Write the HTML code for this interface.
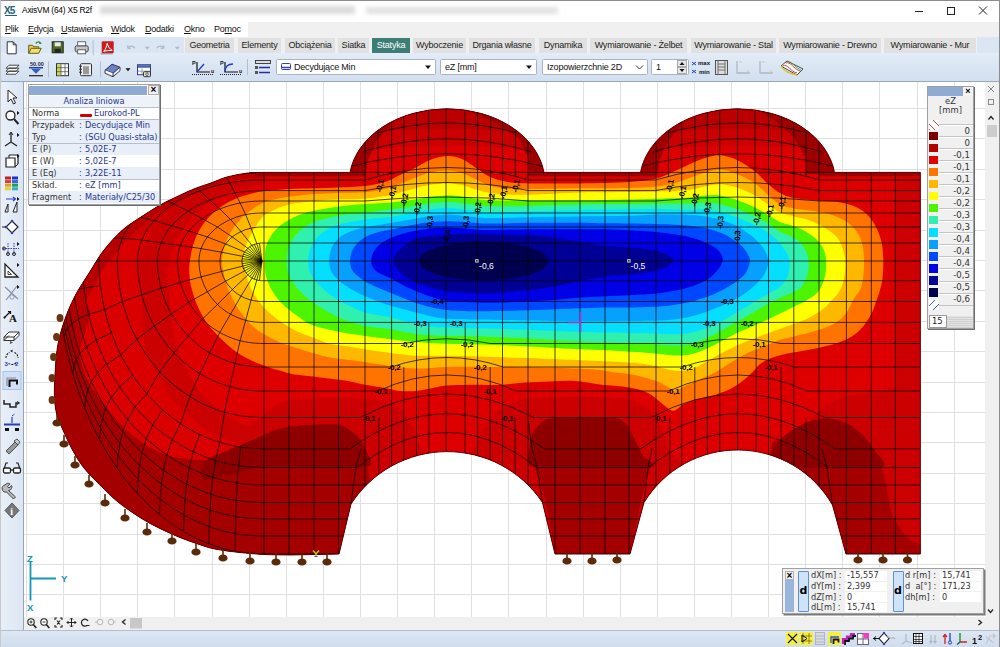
<!DOCTYPE html><html lang="pl"><head><meta charset="utf-8"><title>AxisVM (64) X5 R2f</title><style>
*{box-sizing:border-box}
html,body{margin:0;padding:0}
body{width:1000px;height:647px;overflow:hidden;background:#fff;font-family:"Liberation Sans",sans-serif;font-size:10px;color:#222;position:relative}
.abs{position:absolute}
#titlebar{left:0;top:0;width:1000px;height:22px;background:#fff;border-top:1px solid #8c8c8c}
#title{left:22px;top:5px;font-size:8.4px;color:#000;white-space:nowrap;letter-spacing:-0.2px}
#menubar{left:0;top:22px;width:1000px;height:15px;background:#f0f0f0}
#menuwhite{left:0;top:22px;width:248px;height:15px;background:#fff}
.mi{top:24px;font-size:9px;color:#111;white-space:nowrap;letter-spacing:-0.25px}
.mi u{text-decoration:underline}
#tb1{left:0;top:37px;width:1000px;height:17px;background:#dbe6f4}
#tabstrip{left:184px;top:37px;width:793px;height:16px;background:#f0f0f0}
.tab{top:38px;height:14.5px;background:#e1e1e1;font-size:9px;line-height:14.5px;text-align:center;color:#222;white-space:nowrap;letter-spacing:-0.2px}
.tab.on{background:#3c7d76;color:#fff}
#tb2{left:0;top:53px;width:1000px;height:28px;background:linear-gradient(#e3ecf8,#d2dfef)}
#tb2line{left:0;top:81px;width:1000px;height:1px;background:#9aa7b8}
.combo{top:59px;height:15.5px;border-radius:1.5px;background:#fff;border:1px solid #aab3c0;font-size:9px;line-height:14px;padding-left:4px;white-space:nowrap;letter-spacing:-0.2px;color:#111}
#lefttb{left:0;top:82px;width:24px;height:548px;background:linear-gradient(90deg,#e9f0f9,#dbe5f3);border-right:1px solid #98a4b4}
#vscroll{left:985px;top:82px;width:15px;height:535px;background:#f0f0f0}
#hscroll{left:24px;top:617px;width:976px;height:13px;background:#f0f0f0}
#status{left:0;top:630px;width:1000px;height:17px;background:linear-gradient(#dde7f4,#d0dcec);border-top:1px solid #b4bfce}
#winR{left:999px;top:0;width:1px;height:647px;background:#8c8c8c}
#winL{left:0;top:0;width:1px;height:647px;background:#c8c8c8}
.panel{background:#f0f0f0;border:1px solid #a0a0a0;box-shadow:1px 1px 0 #6e6e6e}
.pt{font-family:"DejaVu Sans",sans-serif;font-size:8.2px;white-space:nowrap;line-height:12px}
.nv{color:#26358f}
.lab{color:#333}
</style></head><body>
<svg id="plot" width="1000" height="647" viewBox="0 0 1000 647" style="position:absolute;left:0;top:0">
<defs><clipPath id="cs"><path d="M262 172.4L349.5 172.4L350 172.4 A97.9 73.5 0 0 1 544 172.4L640.5 172.4A97.9 73.5 0 0 1 834.5 172.4L920.3 172.4 L920.3 554L846 554 L832.5 505A109.5 109.5 0 0 0 644 502.5L630 554 L555 554 L542.5 502.5A114.6 114.6 0 0 0 351 504L339 554 L289.5 555C285.4 554.9 273.2 554.9 265 554.5C256.8 554.1 248.3 553.4 240 552.5C231.7 551.6 222 550.4 215 549C208 547.6 203.8 545.9 198 544C192.2 542.1 186.3 540.1 180 537.5C173.7 534.9 166.7 531.8 160 528.5C153.3 525.2 147 521.9 140 517.5C133 513.1 124.7 507.4 118 502C111.3 496.6 105.7 490.7 100 485C94.3 479.3 88.6 473.8 84 468C79.4 462.2 76 456.3 72.5 450C69 443.7 65.6 435.8 63 430C60.4 424.2 58.4 420.3 57 415C55.6 409.7 54.8 404.7 54.5 398C54.2 391.3 54.5 383.5 55 375C55.5 366.5 56 355.8 57.5 347C59 338.2 61.1 330.5 64 322C66.9 313.5 70.5 304.7 75 296C79.5 287.3 86.2 277.7 91 270C95.8 262.3 98.8 256.7 104 250C109.2 243.3 116.3 235.5 122.5 230C128.7 224.5 134.6 221.2 141 217C147.4 212.8 154.7 208.2 161 204.6C167.3 201 173.3 198.4 179 195.7C184.7 193 189.7 190.6 195 188.5C200.3 186.4 205.7 184.9 211 183C216.3 181.1 221.1 178.6 227 177C232.9 175.4 240.7 174 246.5 173.2C252.3 172.4 259.4 172.5 262 172.4Z"/></clipPath>
<clipPath id="vp"><rect x="24" y="82" width="961" height="535"/></clipPath></defs>
<rect x="24" y="82" width="961" height="535" fill="#fff"/>
<path d="M26.5 82V617M63.5 82V617M100.5 82V617M137.5 82V617M174.5 82V617M212.5 82V617M249.5 82V617M286.5 82V617M323.5 82V617M360.5 82V617M397.5 82V617M434.5 82V617M471.5 82V617M508.5 82V617M546.5 82V617M583.5 82V617M620.5 82V617M657.5 82V617M694.5 82V617M731.5 82V617M768.5 82V617M805.5 82V617M842.5 82V617M879.5 82V617M917.5 82V617M954.5 82V617M24 108.5H985M24 138.5H985M24 169.5H985M24 199.5H985M24 230.5H985M24 260.5H985M24 290.5H985M24 321.5H985M24 351.5H985M24 382.5H985M24 412.5H985M24 442.5H985M24 473.5H985M24 503.5H985M24 534.5H985M24 564.5H985M24 594.5H985" stroke="#dfdfe4" stroke-width="1" fill="none"/>
<g clip-path="url(#cs)">
<rect x="40" y="100" width="900" height="470" fill="#de0000"/>
<path d="M236 440C238.9 420 251.9 425.1 258 420C264.1 414.9 272.4 404.9 282 402C291.6 399.1 317.6 398.3 330 398C342.4 397.7 365.9 398.7 375 400C384.1 401.3 393.1 404.7 398 408C402.9 411.3 408.4 419.1 412 425C415.6 430.9 417.3 448.4 425 452C432.7 455.6 462.4 454.9 470 452C477.6 449.1 478 435.6 482 430C486 424.4 494.9 414 500 410C505.1 406 512 401.7 520 400C528 398.3 549.3 397.4 560 397C570.7 396.6 590.7 396.6 600 397C609.3 397.4 623.3 398.3 630 400C636.7 401.7 645.7 406 650 410C654.3 414 659.3 424.4 662 430C664.7 435.6 664.9 446.7 670 452C675.1 457.3 684 467.6 700 470C716 472.4 776.7 474 790 470C803.3 466 796.7 447.3 800 440C803.3 432.7 809.7 420.6 815 415C820.3 409.4 831.3 401.1 840 398C848.7 394.9 868.7 392.8 880 392C891.3 391.2 919 368.3 925 392C931 415.7 1016.9 546.3 925 570C833.1 593.7 327.9 587.3 236 570C144.1 552.7 233.1 460 236 440Z" fill="#cc0000"/>
<path d="M262 183C258.9 187.7 241.1 187.7 235 190C228.9 192.3 215.2 199.5 210 203C204.8 206.5 194.1 215.3 190 220C185.9 224.7 177.6 236.9 175 243C172.4 249.1 168.6 265.4 168 272C167.4 278.6 169.1 291.4 170 300C170.9 308.6 172.4 335.2 176 346C179.6 356.8 193.2 383.6 200.7 392.7C208.2 401.8 232.8 420.6 240 423.6C247.2 426.6 257.1 420.3 262 418C266.9 415.7 277.6 402.6 282 404C286.4 405.4 297.9 407.1 300 430C302.1 452.9 331.5 580.2 300 600C268.5 619.8 61.5 652.5 30 600C-1.5 547.5 2.9 202.5 30 150C57.1 97.5 234.9 146.2 262 150C289.1 153.8 265.1 178.3 262 183Z" fill="#cb0000"/>
<path d="M152 232C153.9 233.2 142.6 245.3 141 250C139.4 254.7 137.9 266.2 138 272C138.1 277.8 141.2 291.4 142 300C142.8 308.6 141.7 334.8 145 346C148.3 357.2 162.8 386.2 170 396C177.2 405.8 198.8 424.3 207 430C215.2 435.7 236.2 442.4 240 445C243.8 447.6 243.5 450 240 452C236.5 454 217.1 461.1 210 462C202.9 462.9 185.1 461.1 179 460C172.9 458.9 162.9 455.6 157.5 453C152.1 450.4 137.7 441.6 133 438C128.3 434.4 120.6 426 117 422C113.4 418 105.6 409 102 404C98.4 399 88.9 385.5 86 379C83.1 372.5 78.5 354.9 77 348C75.5 341.1 72.7 326.5 73 320C73.3 313.5 76.8 298.8 80 292C83.2 285.2 94.8 268.1 100 262C105.2 255.9 118.9 243.5 125 240C131.1 236.5 150.1 230.8 152 232Z" fill="#da0000"/>
<path d="M70 300C65.5 305.3 58.7 336.7 56 350C53.3 363.3 50.5 389.3 50 400C49.5 410.7 48.8 426 52 430C55.2 434 71.1 435.3 74 430C76.9 424.7 73.2 400.7 74 390C74.8 379.3 77.9 360.7 80 350C82.1 339.3 91.3 316.7 90 310C88.7 303.3 74.5 294.7 70 300Z" fill="#b40000"/>
<path d="M262 168C257.7 167.3 239.6 169.6 230 172C220.4 174.4 200.7 181.5 190 186C179.3 190.5 160 199.5 150 206C140 212.5 123.3 226.2 115 235C106.7 243.8 94 262.7 88 272C82 281.3 70.8 300.2 70 305C69.2 309.8 78 312 82 308C86 304 94.4 283.7 100 275C105.6 266.3 116.5 251.1 124 243C131.5 234.9 146.8 220.5 156 214C165.2 207.5 183 198.5 193 194C203 189.5 221.8 182.3 231 180C240.2 177.7 257.9 178.6 262 177C266.1 175.4 266.3 168.7 262 168Z" fill="#b80000"/>
<path d="M40 290C43.5 254 61.6 296.3 66 300C70.4 303.7 71.5 311.9 73 318C74.5 324.1 75.3 338.1 77 346C78.7 353.9 82.7 369.5 86 377C89.3 384.5 97.9 396.2 102 402C106.1 407.8 112.9 416 117 420.5C121.1 425 127.6 431.9 133 436C138.4 440.1 151.4 448.6 157.5 451.5C163.6 454.4 172 456.9 179 458C186 459.1 201.9 461.1 210 460C218.1 458.9 232.7 453.5 240 450C247.3 446.5 258.8 437 265 434C271.2 431 276.7 428.4 286.5 427.2C296.3 426 328.8 423.4 338.4 424.7C348 426 354.7 433.9 358.2 437C361.7 440.1 363.1 443.7 364.4 448C365.7 452.3 367 462.1 368 469C369 475.9 371.5 486.5 372 500C372.5 513.5 416.3 560.7 372 570C327.7 579.3 84.3 607.3 40 570C-4.3 532.7 36.5 326 40 290Z" fill="#a40000"/>
<path d="M205 461C208.7 457.4 233.8 447.9 242 444.5C250.2 441.1 276.9 429.2 286.5 427.2C296.1 425.2 331.2 423.7 338.4 424.7C345.6 425.7 355.6 434.7 358.2 437C360.8 439.3 363.5 445 364.4 448C365.3 451 377 465.1 367 467C357 468.9 280.2 465.7 264 467C247.8 468.3 210.9 480.6 205 480C199.1 479.4 201.3 464.6 205 461Z" fill="#8e0000"/>
<path d="M534.6 467L650.8 467L644.6 485L641 501L629.8 554.5L555.6 554.5L545.7 501L540.8 485Z" fill="#a40000"/>
<path d="M529.7 447C529.3 444 530.3 439 531 437C531.7 435 535.2 428.9 537 427C538.8 425.1 544.1 419.4 549 418.5C553.9 417.6 579.2 418 586 418C592.8 418 613 417.9 617 418.5C621 419.1 624.5 422.4 626 424C627.5 425.6 630.8 431.8 632 434C633.2 436.2 636.9 443.8 638 446C639.1 448.2 641.7 453.9 643 456C644.3 458.1 661.6 465.9 650.8 467C640 468.1 546.7 469 534.6 467C522.5 465 530.1 450 529.7 447Z" fill="#8e0000"/>
<path d="M771 452C772.2 434.7 777.2 442.9 780 440C782.8 437.1 788.3 432.9 792 430.5C795.7 428.1 803.2 423.6 808 422C812.8 420.4 822.7 418.3 828 418.6C833.3 418.9 843.3 421.7 848 424C852.7 426.3 860.1 432.5 863.6 436C867.1 439.5 871.7 446 874 450C876.3 454 879.3 460.9 881 466C882.7 471.1 885.8 482.4 887 488C888.2 493.6 888.9 503.4 890 507.7C891.1 512 893.4 516.9 895 520C896.6 523.1 900 528.3 902 531C904 533.7 906.9 537.7 910 540C913.1 542.3 923 544 925 548C927 552 945.5 567.1 925 570C904.5 572.9 791.5 585.7 771 570C750.5 554.3 769.8 469.3 771 452Z" fill="#a40000"/>
<path d="M771 452C771.9 449.3 777.9 442.1 780 440C782.1 437.9 789.2 432.3 792 430.5C794.8 428.7 804.4 423.2 808 422C811.6 420.8 824 418.4 828 418.6C832 418.8 844.4 422.3 848 424C851.6 425.7 861 433.4 863.6 436C866.2 438.6 872.3 446.9 874 450C875.7 453.1 891.3 465.3 881 467C870.7 468.7 782 468.5 771 467C760 465.5 770.1 454.7 771 452Z" fill="#8e0000"/>
<path d="M347 100 H547 V152 Q447 140 347 152Z" fill="#cc0000"/>
<path d="M347 100 H547 V135 Q447 123 347 135Z" fill="#bc0000"/>
<path d="M544.2 173.4L542.8 167.1L540.6 160.9L537.8 154.9L534.2 149L530 143.5L525.2 138.2L519.8 133.2L513.8 128.6L507.3 124.5L500.3 120.8L493 117.5L485.3 114.7L477.3 112.5L469 110.8L492 121L518.8 138L528 158L529 174Z" fill="#9e0000"/>
<path d="M349.8 173.4L351.2 167.1L353.4 160.9L356.2 154.9L359.8 149L364 143.5L368.8 138.2L374.2 133.2L380.2 128.6L386.7 124.5L393.7 120.8L387.8 128L376 142L368 160L366 174Z" fill="#9e0000"/>
<path d="M637.5 100 H837.5 V152 Q737.5 140 637.5 152Z" fill="#cc0000"/>
<path d="M637.5 100 H837.5 V135 Q737.5 123 637.5 135Z" fill="#bc0000"/>
<path d="M834.7 173.4L833.3 167.1L831.1 160.9L828.3 154.9L824.7 149L820.5 143.5L815.7 138.2L810.3 133.2L804.3 128.6L797.8 124.5L790.8 120.8L783.5 117.5L775.8 114.7L767.8 112.5L759.5 110.8L776 121L794.3 138L805.5 158L806.5 174Z" fill="#9e0000"/>
<path d="M640.3 173.4L641.7 167.1L643.9 160.9L646.7 154.9L650.3 149L654.5 143.5L659.3 138.2L664.7 133.2L670.7 128.6L677.2 124.5L684.2 120.8L678.8 128L667.5 142L659.5 160L657.5 174Z" fill="#9e0000"/>
<path d="M255 174.3H366M528 174.3H656M819 174.3H925" stroke="#9c0000" stroke-width="4" fill="none"/>
<path d="M897 176H925V400H897C893 330 893 250 897 176Z" fill="#cc0000"/>
<path d="M190 260C190.7 255.3 191.8 249.1 193.4 244C195 238.9 197.1 234.1 199.8 229.5C202.5 224.9 206 220.3 209.5 216.6C213 212.8 216.7 209.8 220.7 207C224.7 204.2 229.3 201.7 233.6 199.7C237.9 197.7 241.6 196.4 246.5 195C251.4 193.6 255.9 192.2 263 191.2C270.1 190.2 280.5 189.5 289 189C297.5 188.5 305.8 188.6 314 188.3C322.2 188.1 329.5 187.9 338 187.5C346.5 187.1 357.2 186.9 365 186C372.8 185.1 379.2 183.8 385 182C390.8 180.2 395 177.3 400 175C405 172.7 410 170.5 415 168C420 165.5 424.7 162 430 160C435.3 158 441.7 156.2 447 156C452.3 155.8 457.2 157 462 159C466.8 161 471.3 165 476 168C480.7 171 484.7 174.7 490 177C495.3 179.3 501.3 180.9 508 182C514.7 183.1 518 183.2 530 183.4C542 183.6 563.3 183.6 580 183.4C596.7 183.2 617.3 182.8 630 182C642.7 181.2 648.5 180.4 656 178.6C663.5 176.8 669.3 173.4 675 171C680.7 168.6 685 166.2 690 164C695 161.8 700 159.4 705 158C710 156.6 714.7 155 720 155.3C725.3 155.6 731.2 157.3 737 160C742.8 162.7 749.8 167.4 755 171.4C760.2 175.4 763.8 180.4 768 184C772.2 187.6 775.7 190.7 780 193C784.3 195.3 787.7 196.8 794 198C800.3 199.2 810.8 199.8 818 200.5C825.2 201.2 831.6 201.1 837.5 202C843.4 202.9 848.8 204 853.6 206C858.4 208 862.8 210.5 866.5 214C870.2 217.5 873.5 222.2 876 227C878.5 231.8 880.5 237.4 881.7 243C882.9 248.6 883.2 254.8 883.3 260.7C883.4 266.6 883 273.5 882.5 278.4C882 283.3 880.9 286.6 880 290C879.1 293.4 878.5 295 877 299C875.5 303 874.1 308.8 871.3 314C868.5 319.2 864.3 325.7 860 330C855.7 334.3 851.2 337 845.6 339.7C840 342.4 833.6 344.1 826.3 346C819 347.9 809.2 349.6 802 351C794.8 352.4 788.3 353.2 783 354.5C777.7 355.8 773.8 356.9 770 358.5C766.2 360.1 762.9 361.8 760 364C757.1 366.2 755.8 369 752.7 372C749.6 375 745.5 378.8 741.5 381.8C737.5 384.8 733.4 387.5 728.6 389.8C723.8 392.1 717.9 393.9 712.5 395.5C707.1 397.1 701.3 398 696.5 399.5C691.7 401 687.5 402.4 683.6 404.3C679.7 406.2 676.8 411 673 410.7C669.2 410.4 665.1 405.6 661 402.7C656.9 399.8 653.5 395.6 648.2 393C642.9 390.4 637 388.8 629 387.4C621 386 609 385.6 600 384.5C591 383.4 583.3 381.5 575 381C566.7 380.5 558.3 381.2 550 381.5C541.7 381.8 533.3 381.9 525 382.5C516.7 383.1 508.3 384.6 500 385C491.7 385.4 483.8 384.6 475 384.7C466.2 384.8 454.5 384.9 447 385.5C439.5 386.1 435.2 387.6 430 388.5C424.8 389.4 421 390.6 416 391C411 391.4 405.2 391.5 400 391C394.8 390.5 390.8 389.1 385 388C379.2 386.9 371.7 385.9 365 384.7C358.3 383.4 352.5 381.7 345 380.5C337.5 379.3 328.8 378.5 320 377.4C311.2 376.3 298.2 375 292 374C285.8 373 286.8 372.6 282.5 371.3C278.2 370.1 271.9 368.4 266.5 366.5C261.1 364.6 255.8 362.7 250.4 360C245 357.3 239.4 354.1 234.3 350.4C229.2 346.6 224.4 342.1 219.8 337.5C215.2 332.9 210.8 328.4 207 323C203.2 317.6 200 311.6 197.3 305.4C194.6 299.2 192.3 291.6 191 286C189.7 280.4 189.5 276.3 189.3 272C189.1 267.7 189.3 264.7 190 260Z" fill="#ff7400"/>
<path d="M222 260C222.2 255.6 223.4 250.2 224.8 245.6C226.2 241 228.1 236.7 230.4 232.7C232.7 228.7 235.5 224.8 238.4 221.4C241.3 218.1 244 215.7 248 212.6C252 209.5 257.4 205.3 262.5 203C267.6 200.7 273.2 199.7 278.6 198.5C284 197.3 288.8 196.8 294.7 196C300.6 195.2 306.8 194.5 314 194C321.2 193.5 329.5 193.3 338 193C346.5 192.7 357.2 193 365 192.3C372.8 191.6 379.2 190.4 385 189C390.8 187.6 395 185.9 400 184C405 182.1 410 179.7 415 177.8C420 175.9 424.7 173.7 430 172.5C435.3 171.3 441.7 170.4 447 170.5C452.3 170.6 457.2 171.5 462 173C466.8 174.5 471.3 177.4 476 179.5C480.7 181.6 484.7 184.3 490 185.8C495.3 187.3 501.3 188 508 188.5C514.7 189 518 189.1 530 189C542 188.9 563.3 188.4 580 188.2C596.7 188 617.3 188.3 630 188C642.7 187.7 648.5 187.4 656 186.6C663.5 185.8 669.3 184.5 675 183C680.7 181.5 685 179.6 690 177.8C695 176.1 700 173.8 705 172.5C710 171.2 714.7 169.4 720 169.7C725.3 169.9 731.2 171.7 737 174C742.8 176.3 749.8 179.9 755 183.4C760.2 186.9 763.8 191.5 768 195C772.2 198.5 775.7 202.1 780 204.3C784.3 206.6 787.7 207.3 794 208.5C800.3 209.7 811.3 210.5 818 211.7C824.7 212.9 829.2 214 834 215.7C838.8 217.4 843.2 219.3 847 222C850.8 224.7 854.2 228 856.8 231.8C859.4 235.6 861.2 239.9 862.4 244.7C863.6 249.5 863.9 255.1 864 260.7C864.1 266.3 863.7 273.5 863 278.4C862.3 283.3 861.6 286.6 860 290C858.4 293.4 856 295 853.6 299C851.2 303 848.8 309.9 845.6 314C842.4 318.1 838.9 320.9 834.3 323.6C829.7 326.3 824.9 327.9 818.2 330C811.5 332.1 800.4 334.8 794 336.4C787.6 338 784.3 338.3 780 339.7C775.7 341.1 771.3 343.1 768 344.5C764.7 345.9 763.9 346.3 760 348C756.1 349.7 749.9 351.8 744.7 354.5C739.5 357.2 734 360.8 728.6 364C723.2 367.2 717.9 371 712.5 373.8C707.1 376.6 701.3 378.9 696.5 381C691.7 383.1 687.1 384.9 683.6 386.6C680.1 388.3 678.2 391.3 675.6 391.4C673 391.5 671.3 388.7 668 387C664.7 385.3 662 383.1 656 381C650 378.9 638.8 376 632 374.6C625.2 373.2 620.3 373.4 615 372.6C609.7 371.8 606.7 370.7 600 370C593.3 369.3 583.3 368.9 575 368.5C566.7 368.1 559.2 368 550 367.8C540.8 367.6 531.7 367.3 520 367.2C508.3 367.1 492.2 367 480 367C467.8 367 457.7 366.7 447 367C436.3 367.3 425.5 368.8 416 368.6C406.5 368.4 398.5 367.1 390 366C381.5 364.9 372.5 363.1 365 362C357.5 360.9 350.8 360.2 345 359.5C339.2 358.8 335.1 358.6 330 357.6C324.9 356.6 321.5 355.6 314.7 353.6C307.9 351.6 296 348 289 345.6C282 343.2 278.3 341.7 272.9 339C267.5 336.3 261.6 333.2 256.8 329.5C252 325.8 247.8 321.2 244 316.6C240.2 312 237.1 307.1 234.3 302C231.5 296.9 228.8 291 227 286C225.2 281 224.3 276.3 223.5 272C222.7 267.7 221.8 264.4 222 260Z" fill="#ffb800"/>
<path d="M243 258C243.2 253.7 244.8 248.5 246.5 244C248.2 239.5 250.2 235.5 252.9 231C255.6 226.5 259.3 220.3 262.5 217C265.7 213.7 267.6 213.1 272 211C276.4 208.9 282 206.2 289 204.5C296 202.8 305.8 201.8 314 201C322.2 200.2 329.5 200 338 199.6C346.5 199.2 357.2 199.4 365 198.8C372.8 198.2 379.2 197.1 385 196C390.8 194.9 395 193.8 400 192.5C405 191.2 410 189.5 415 188.2C420 186.9 424.7 185.6 430 184.8C435.3 184 441.7 183.4 447 183.4C452.3 183.4 457.2 184 462 185C466.8 186 471.3 188.2 476 189.5C480.7 190.8 484.7 192.2 490 193C495.3 193.8 501.3 194.2 508 194.5C514.7 194.8 518 195 530 194.7C542 194.4 563.3 192.9 580 192.5C596.7 192.1 617.3 192.2 630 192C642.7 191.8 648.5 191.6 656 191.4C663.5 191.2 669.3 191.3 675 191C680.7 190.7 685 190.6 690 189.8C695 189.1 700 187.4 705 186.5C710 185.6 714.7 184 720 184.2C725.3 184.4 731.2 185.6 737 187.5C742.8 189.4 749.8 192.7 755 195.5C760.2 198.3 763.8 201.7 768 204.5C772.2 207.3 775.7 210.3 780 212.3C784.3 214.3 789 215.1 794 216.5C799 217.9 804.7 218.5 810 220.5C815.3 222.5 821.4 225.7 826 228.6C830.6 231.5 834.7 234.5 837.5 238C840.3 241.5 841.7 245.5 843 249.5C844.3 253.5 845.3 257.2 845.5 262C845.7 266.8 844.9 273.7 844 278.4C843.1 283.1 841.6 286.8 840 290C838.4 293.2 837.1 294.3 834.3 297.5C831.5 300.7 827.5 305.4 823 309C818.5 312.6 813.2 315.8 807 318.8C800.8 321.8 792.5 324.4 786 326.8C779.5 329.2 774 331 768 333.2C762 335.4 755.5 337.8 750 340C744.5 342.2 740 344.2 735 346.5C730 348.8 725 351.3 720 354C715 356.7 709.7 360 705 362.5C700.3 365 696 367.6 692 369C688 370.4 685 370.9 681 371C677 371.1 672.3 370.3 668 369.5C663.7 368.7 659.7 367 655 366C650.3 365 645.8 364.2 640 363.5C634.2 362.8 626.7 362.4 620 362C613.3 361.6 607.5 361.3 600 361C592.5 360.7 583.3 360.3 575 360C566.7 359.7 559.2 359.4 550 359C540.8 358.6 531.7 358.2 520 357.8C508.3 357.4 492.2 356.9 480 356.5C467.8 356.1 457.7 355.8 447 355.7C436.3 355.6 425.5 356.1 416 355.7C406.5 355.2 398.5 354.1 390 353C381.5 351.9 372.5 350.5 365 349.3C357.5 348.1 350.8 346.9 345 346C339.2 345.1 335.1 345.3 330 344C324.9 342.7 319.9 340.3 314.7 338.3C309.5 336.3 304 334.6 298.6 332C293.2 329.4 287.9 326.7 282.5 323C277.1 319.3 271.1 314.6 266.5 310C261.9 305.4 257.9 300.2 255 295.7C252.1 291.2 250.5 287.3 248.8 283C247.1 278.7 246 274.2 245 270C244 265.8 242.8 262.3 243 258Z" fill="#ffff00"/>
<path d="M265 261C265 256.1 264.8 251.1 266 246.6C267.2 242.1 269.6 237.7 272.3 234C275 230.3 277.9 227.4 282 224.3C286.1 221.2 291.6 218 297 215.7C302.4 213.4 307.3 212.2 314.3 210.7C321.3 209.2 330.6 207.6 339 206.5C347.4 205.4 356.3 204.7 365 204C373.7 203.3 382.7 203.2 391 202.4C399.3 201.7 408.5 200.4 415 199.5C421.5 198.6 424.7 197.5 430 196.8C435.3 196.1 441.7 195.6 447 195.5C452.3 195.4 457.2 195.9 462 196.5C466.8 197.1 471.3 198.2 476 198.8C480.7 199.4 481 200.1 490 200.3C499 200.6 515 200.3 530 200.3C545 200.3 563.3 200.4 580 200.3C596.7 200.2 617.3 199.8 630 199.5C642.7 199.2 646 199 656 198.7C666 198.3 681.8 197.9 690 197.4C698.2 196.9 700 195.8 705 195.5C710 195.2 714.7 194.8 720 195.5C725.3 196.2 731.2 198 737 200C742.8 202 749.8 205 755 207.5C760.2 210 763.8 212.6 768 215C772.2 217.4 776.3 220.3 780 222C783.7 223.7 786.3 223.8 790 225C793.7 226.2 797.8 227.2 802 229.4C806.2 231.6 811.5 234.9 815 238C818.5 241.1 821.2 244.5 823 248C824.8 251.5 825.6 254.7 826 259C826.4 263.3 826.3 269 825.5 273.6C824.7 278.2 823 283.1 821.4 286.5C819.8 289.9 818.2 291.8 816 294C813.8 296.2 810.8 297.8 808 299.5C805.2 301.2 803.2 302.2 799 304.3C794.8 306.4 788.1 309.8 782.9 312.3C777.7 314.8 773.5 317 768 319.5C762.5 322 755.5 325.1 750 327.5C744.5 329.9 740 331.6 735 334C730 336.4 725 339.4 720 342C715 344.6 709.7 347.5 705 349.5C700.3 351.5 696 353 692 354C688 355 685 355.3 681 355.5C677 355.7 673.2 355.4 668 355C662.8 354.6 656.3 353.6 650 353C643.7 352.4 638.3 352.2 630 351.7C621.7 351.2 609.2 350.4 600 350C590.8 349.6 583.3 349.4 575 349C566.7 348.6 559.2 348.2 550 347.7C540.8 347.2 531.7 346.5 520 346C508.3 345.5 492.2 344.9 480 344.5C467.8 344.1 457.7 344.1 447 343.7C436.3 343.3 425.3 342.8 416 342C406.7 341.2 399.5 340.2 391 339.2C382.5 338.2 373.5 337.2 365 336C356.5 334.8 348.8 333.8 340 332C331.2 330.2 319.2 327.7 312 325C304.8 322.3 302 319.4 297 315.8C292 312.2 286.1 307.6 282 303.5C277.9 299.4 275 295.5 272.3 291C269.6 286.5 267.2 281.3 266 276.3C264.8 271.3 265 265.9 265 261Z" fill="#4cf400"/>
<path d="M287 261C287 256.9 287.3 252.8 288.4 249C289.4 245.2 290.8 241.5 293.3 238C295.8 234.5 299.3 230.8 303.2 228C307.1 225.2 310.8 223.1 316.8 221C322.8 218.9 331 216.9 339 215.5C347 214.1 356.3 213.5 365 212.5C373.7 211.5 382.7 210.6 391 209.5C399.3 208.4 408.5 207 415 206C421.5 205 424.7 204 430 203.3C435.3 202.6 441.7 202.1 447 202C452.3 201.9 457.2 202.5 462 203C466.8 203.5 471.3 204.5 476 205C480.7 205.5 481 205.8 490 206C499 206.2 515 206.3 530 206C545 205.7 563.3 204.6 580 204.3C596.7 204 617.3 204.1 630 204C642.7 203.9 646 203.6 656 203.5C666 203.4 681.8 203.7 690 203.5C698.2 203.3 700 202.4 705 202.5C710 202.6 714.7 203.2 720 204.3C725.3 205.4 731.2 207 737 209C742.8 211 749.8 214 755 216.4C760.2 218.8 763.8 221 768 223.5C772.2 226 776.3 229.5 780 231.6C783.7 233.7 786.8 234.4 790 236C793.2 237.6 796.3 238.9 799 241.4C801.7 243.9 804.4 247.8 806 251C807.6 254.2 808.3 256.9 808.6 260.7C808.9 264.5 808.9 269.3 807.8 273.6C806.7 277.9 804.1 283.5 802 286.5C799.9 289.5 797.4 290.2 795 291.5C792.6 292.8 790.8 293.2 787.7 294.5C784.6 295.8 779.7 298 776.4 299.5C773.1 301 772.4 301.2 768 303.7C763.6 306.2 755.5 311.3 750 314.5C744.5 317.7 740 320.1 735 323C730 325.9 725 328.9 720 331.6C715 334.3 709.7 337 705 339C700.3 341 696 342.4 692 343.5C688 344.6 685 345 681 345.3C677 345.6 673.2 345.4 668 345.2C662.8 345 656.3 344.3 650 344C643.7 343.7 638.3 343.5 630 343.2C621.7 342.9 609.2 342.4 600 342C590.8 341.6 583.3 341.4 575 341C566.7 340.6 559.2 340.2 550 339.7C540.8 339.2 531.7 338.6 520 338C508.3 337.4 492.2 336.7 480 336.4C467.8 336.1 457.7 336.4 447 336C436.3 335.6 425.3 335.1 416 334C406.7 332.9 399.5 330.6 391 329.3C382.5 328 372 327.3 365 326C358 324.7 354.2 323.3 349 321.5C343.8 319.7 339.4 317.8 334 315C328.6 312.2 321.7 308.2 316.8 305C311.9 301.8 308.2 298.8 304.5 295.5C300.8 292.2 297.3 288.6 294.6 285C291.9 281.4 289.7 277.8 288.4 273.8C287.1 269.8 287 265.1 287 261Z" fill="#30f0b0"/>
<path d="M308.2 261C308.2 257.3 308.7 253.9 309.9 250.3C311.1 246.7 313 242.5 315.6 239.2C318.2 235.9 321.6 232.9 325.5 230.5C329.4 228.1 332.4 226.3 339 224.5C345.6 222.7 356.3 220.8 365 219.5C373.7 218.2 382.7 218 391 216.8C399.3 215.6 408.5 213.5 415 212.3C421.5 211.1 424.7 210.2 430 209.5C435.3 208.8 441.7 208.3 447 208.3C452.3 208.3 457.2 208.8 462 209.3C466.8 209.8 471.3 210.7 476 211.2C480.7 211.7 481 212.2 490 212.3C499 212.4 515 211.9 530 211.5C545 211.1 563.3 210.4 580 210C596.7 209.6 617.3 209.5 630 209.3C642.7 209.1 646 208.9 656 209C666 209.1 681.8 209.8 690 209.8C698.2 209.9 700 208.9 705 209.3C710 209.7 714.7 210.9 720 212.3C725.3 213.7 731.2 215.3 737 217.5C742.8 219.7 749.8 222.7 755 225.2C760.2 227.7 764.2 229.9 768 232.5C771.8 235.1 775.2 238.1 778 241C780.8 243.9 783.2 247.2 785 250C786.8 252.8 788.2 255.3 789 258C789.8 260.7 789.7 262.9 789.5 266C789.3 269.1 789 273.6 787.7 276.8C786.5 280 784.1 282.8 782 285C779.9 287.2 777.3 288.5 775 290C772.7 291.5 772.2 291.6 768 294C763.8 296.4 755.5 301.2 750 304.5C744.5 307.8 740 310.6 735 313.5C730 316.4 725 319.5 720 322C715 324.5 709.7 326.8 705 328.5C700.3 330.2 696 331.6 692 332.5C688 333.4 685 333.7 681 334C677 334.3 673.2 334.3 668 334.2C662.8 334.1 656.3 333.7 650 333.5C643.7 333.3 638.3 333.2 630 333C621.7 332.8 609.2 332.7 600 332.5C590.8 332.3 583.3 332.1 575 331.8C566.7 331.5 559.2 331.2 550 330.8C540.8 330.4 531.7 329.9 520 329.5C508.3 329.1 492.2 328.7 480 328.4C467.8 328.1 457.7 328.3 447 327.6C436.3 326.9 425.3 326.1 416 324.4C406.7 322.7 399.5 319.6 391 317.6C382.5 315.6 371.2 314.1 365 312.5C358.8 310.9 358.3 310 354 308C349.7 306 343.6 303.2 339 300.5C334.4 297.8 330.4 295 326.7 292C323 289 319.6 285.8 316.8 282.5C314 279.2 311.3 275.9 309.9 272.3C308.5 268.7 308.2 264.7 308.2 261Z" fill="#04deff"/>
<path d="M329.2 261C329.1 257.8 329.4 254.7 330.4 251.5C331.4 248.3 333.1 244.5 335.4 241.7C337.7 238.9 340.5 236.5 344 234.5C347.5 232.5 351.9 230.9 356.4 229.5C360.9 228.1 365.4 227.4 371.2 226.3C377 225.2 383.7 224.2 391 223C398.3 221.8 408.5 220 415 218.8C421.5 217.6 424.7 216.7 430 216C435.3 215.3 441.7 214.9 447 214.8C452.3 214.8 457.2 215.3 462 215.7C466.8 216.1 471.3 216.9 476 217.3C480.7 217.7 481 218 490 218C499 218 515 217.5 530 217.2C545 216.9 563.3 216.6 580 216.4C596.7 216.2 616.7 216.1 630 215.8C643.3 215.5 649.7 214.6 660 214.5C670.3 214.4 684.5 214.7 692 215C699.5 215.3 701 215.9 705 216.5C709 217.1 712.3 217.7 716 218.6C719.7 219.5 723.5 220.8 727 222C730.5 223.2 733.8 224.3 737 226C740.2 227.7 743.3 230.2 746 232C748.7 233.8 750.7 235 753 237C755.3 239 758 241.7 760 244C762 246.3 763.6 248.1 765 251C766.4 253.9 768.5 257.7 768.5 261.4C768.5 265.1 766.4 269.9 765 273C763.6 276.1 762 277.7 760 280C758 282.3 755.5 284.8 753 287C750.5 289.2 747.7 291.6 745 293.5C742.3 295.4 740 296.7 737 298.4C734 300.1 730.5 301.9 727 303.5C723.5 305.1 720.5 306.2 716 308C711.5 309.8 705.8 312.3 700 314C694.2 315.7 687.7 317.3 681 318.4C674.3 319.5 668.5 320.1 660 320.5C651.5 320.9 640 320.9 630 321C620 321.1 609.2 321.2 600 321.2C590.8 321.2 583.3 321.2 575 321.2C566.7 321.2 559.2 321.1 550 321C540.8 320.9 531.7 320.5 520 320.3C508.3 320.1 492.2 319.9 480 319.6C467.8 319.4 455.3 319.4 447 318.8C438.7 318.2 435.2 317.1 430 316C424.8 314.9 422.5 314.2 416 312.5C409.5 310.8 397.2 307.6 391 305.8C384.8 304 383.6 303.4 378.6 301.5C373.7 299.6 366.5 296.9 361.3 294.5C356.1 292.1 351.6 289.5 347.7 287C343.8 284.5 340.6 282.2 337.8 279.5C335.1 276.8 332.6 274.1 331.2 271C329.8 267.9 329.3 264.2 329.2 261Z" fill="#08a0ff"/>
<path d="M350.2 261C350.2 258 350.7 254.5 351.9 251.5C353.1 248.5 355.2 245.4 357.6 242.9C360 240.4 362.8 238.3 366.3 236.5C369.8 234.7 374.5 233.2 378.6 232C382.7 230.8 384.9 230.8 391 229.5C397.1 228.2 408.5 225.6 415 224.4C421.5 223.2 424.7 222.7 430 222.2C435.3 221.7 441.7 221.3 447 221.2C452.3 221.1 457.2 221.5 462 221.8C466.8 222.1 471.3 222.7 476 223C480.7 223.3 481 223.6 490 223.6C499 223.6 515 222.9 530 222.8C545 222.7 567.7 222.7 580 222.8C592.3 222.9 595.7 223.2 604 223.3C612.3 223.4 621.3 223.4 630 223.5C638.7 223.6 648.5 223.8 656 224C663.5 224.2 669 224.5 675 224.8C681 225.1 687 225.5 692 226C697 226.5 701 227.2 705 228C709 228.8 712.7 229.9 716 231C719.3 232.1 722.3 233.2 725 234.5C727.7 235.8 729.5 237.3 732 239C734.5 240.7 737.8 242.7 740 244.5C742.2 246.3 743.3 247.4 745 250C746.7 252.6 749.7 256.3 750 259.8C750.3 263.3 748.1 268.1 746.8 271C745.5 273.9 743.9 275.2 742 277C740.1 278.8 738.1 280.2 735.6 282C733.1 283.8 730.3 285.6 727 287.5C723.7 289.4 719.7 291.5 716 293.2C712.3 294.9 709 296.1 705 297.5C701 298.9 697 300.4 692 301.6C687 302.8 680.3 304 675 304.8C669.7 305.6 667.5 306.1 660 306.5C652.5 306.9 639.3 307.3 630 307.5C620.7 307.7 613.2 307.3 604 307.5C594.8 307.7 584 308.1 575 308.5C566 308.9 559.2 309.3 550 309.6C540.8 309.9 531.7 310.2 520 310.5C508.3 310.8 489.7 311.2 480 311.3C470.3 311.4 467.5 311.2 462 311C456.5 310.8 452.3 310.7 447 310C441.7 309.3 435.2 308.2 430 307C424.8 305.8 420.5 304.5 416 303C411.5 301.5 407.2 299.7 403 298C398.8 296.3 394.8 294.6 391 293C387.2 291.4 383.7 290.1 380 288.5C376.3 286.9 372.2 285.4 368.7 283.5C365.2 281.6 361.7 279.3 358.9 277C356.1 274.7 353.3 272.2 351.9 269.5C350.4 266.8 350.2 264 350.2 261Z" fill="#0048ff"/>
<path d="M371.2 261C371.2 258.5 372 255.4 373.2 252.8C374.4 250.2 376.1 247.7 378.6 245.4C381.2 243.1 384.8 240.9 388.5 239C392.2 237.1 396.5 235.6 400.9 234.2C405.3 232.8 410.1 231.8 415 230.8C419.9 229.9 424.7 229 430 228.5C435.3 228 441.7 227.6 447 227.6C452.3 227.6 457.2 228 462 228.3C466.8 228.6 471.3 229.2 476 229.5C480.7 229.8 481 230.1 490 230C499 229.9 515 229.3 530 229.2C545 229.1 567.7 229.2 580 229.2C592.3 229.2 595.7 229.1 604 229.3C612.3 229.5 621.3 229.9 630 230.3C638.7 230.8 649.3 231.4 656 232C662.7 232.6 665.3 233.1 670 233.7C674.7 234.3 679.5 234.8 684 235.7C688.5 236.6 693 238 697 239.3C701 240.7 705 242.4 708 243.8C711 245.2 713.1 246.2 715 247.5C716.9 248.8 718.2 250 719.5 251.8C720.8 253.6 722.4 256.2 722.7 258.2C723 260.2 722.1 262.3 721.5 264C720.9 265.7 720.2 266.8 719 268.5C717.8 270.2 715.8 272.2 714 274C712.2 275.8 710.8 277.2 708 279C705.2 280.8 701 282.9 697 284.5C693 286.1 688.5 287.6 684 288.8C679.5 290 674.7 290.7 670 291.5C665.3 292.3 662.7 293 656 293.6C649.3 294.2 638.7 294.8 630 295.2C621.3 295.6 613.2 295.7 604 296.2C594.8 296.7 584 297.3 575 298C566 298.7 559.2 299.7 550 300.3C540.8 300.9 530 301.4 520 301.8C510 302.2 498.3 302.6 490 302.7C481.7 302.8 477.2 302.5 470 302.2C462.8 301.9 453.7 301.9 447 301C440.3 300.1 435.2 298.2 430 296.5C424.8 294.8 420.4 292.8 416 291C411.6 289.2 407.6 287.6 403.4 285.5C399.2 283.4 394.9 280.5 391 278.5C387.1 276.5 382.9 275.2 379.9 273.5C376.9 271.8 374.6 270.1 373.2 268C371.8 265.9 371.2 263.5 371.2 261Z" fill="#0000e6"/>
<path d="M393.5 261C393.5 258.7 394.4 256.4 396 254C397.6 251.6 400.2 249.1 403.4 246.6C406.6 244.1 410.6 241 415 239.2C419.4 237.4 424.7 236.7 430 236C435.3 235.3 441.7 235.2 447 234.9C452.3 234.6 456.8 234.3 462 234.2C467.2 234 471.7 233.9 478 234C484.3 234.1 493 234.4 500 234.6C507 234.8 513.3 235.1 520 235.3C526.7 235.5 534 235.2 540 235.7C546 236.1 550.7 237.2 556 238C561.3 238.8 566.7 239.6 572 240.5C577.3 241.4 582.7 242.6 588 243.5C593.3 244.4 598.7 245.4 604 246C609.3 246.6 614.6 246.7 620 247C625.4 247.3 631.5 247.6 636.5 248C641.5 248.4 646 249 650 249.7C654 250.4 657.4 251 660.6 252C663.8 253 666.8 254.2 669 255.5C671.2 256.8 674 258.4 674 260C674 261.6 671.2 263.4 669 265C666.8 266.6 663.8 268.3 660.6 269.5C657.4 270.7 654 271.2 650 272C646 272.8 641.5 273.4 636.5 274C631.5 274.6 625.4 274.8 620 275.3C614.6 275.8 609.3 276.4 604 277C598.7 277.6 593.7 278.2 588 279.2C582.3 280.2 576.3 281.7 570 283C563.7 284.3 556.7 286 550 287.2C543.3 288.4 536.7 289.2 530 290C523.3 290.8 516.7 291.4 510 292C503.3 292.6 496.7 293.1 490 293.3C483.3 293.5 477.2 293.3 470 293C462.8 292.7 453.3 292.3 447 291.4C440.7 290.5 437.3 289.1 432 287.5C426.7 285.9 419.8 284.1 415 282C410.2 279.9 406.6 277.4 403.4 275C400.2 272.6 397.6 269.9 396 267.6C394.4 265.3 393.5 263.3 393.5 261Z" fill="#000094"/>
<ellipse cx="483.5" cy="261" rx="64.7" ry="19.4" fill="#00004e"/>
<path d="M264 100V560M289 100V560M314 100V560M338.5 100V560M365 100V560M391.6 100V560M416.5 100V560M446 100V560M477.6 100V560M502.5 100V560M528 100V560M555 100V560M580 100V560M605 100V560M629 100V560M656 100V560M681.7 100V560M707.4 100V560M737.6 100V560M768.5 100V560M793.8 100V560M819 100V560M846.4 100V560M871.3 100V560M895.4 100V560M403.7 100V213M428.6 100V213M464.8 100V213M490.5 100V213M694.8 100V213M719.7 100V213M755 100V213M781.6 100V213M378 100V177M515.4 100V177M668.5 100V177M806 100V177M352 166Q447 141.5 542 166M362 152Q447 125.5 532 152M377 133Q447 113 517 133M642.5 166Q737.5 141.5 832.5 166M652.5 152Q737.5 125.5 822.5 152M667.5 133Q737.5 113 807.5 133M428.8 322.4V560M465.2 322.4V560M403.8 367V560M490.2 367V560M378.8 417.5V560M515.2 417.5V560M719.8 322.4V560M756.2 322.4V560M694.8 367V560M781.2 367V560M669.8 417.5V560M806.2 417.5V560M262 261H925M262 243H925M262 227H925M262 213H925M262 201H365Q447 193 529 201H655.5Q737.5 193 819.5 201H925M262 190.6H365Q447 174.4 529 190.6H655.5Q737.5 174.4 819.5 190.6H925M262 180H365Q447 155 529 180H655.5Q737.5 155 819.5 180H925M262 172.4H925M262 280.7H925M262 301.5H925M262 322.4H925M262 343.5H404Q447 334 490 343.5H695Q738 334 781 343.5H925M262 367H391Q447 348 503 367H682Q738 348 794 367H925M262 391H378Q447 359 516 391H669Q738 359 807 391H925M262 417.5H360.3Q447 370.5 533.7 417.5H651.3Q738 370.5 824.7 417.5H925M262 448.8H349.8Q447 378.8 544.2 448.8H640.8Q738 378.8 835.2 448.8H925M262 467.5H357.2Q447 397.5 536.8 467.5H648.2Q738 397.5 827.8 467.5H925M262 485H925M262 502.5H925M262 518.8H925M262 536H925M262 553.8H925M262 243C261.7 243 260.6 243 259.9 243.1C259.2 243.2 258.5 243.3 257.8 243.4C257.2 243.5 256.5 243.7 255.8 243.9C255.2 244.1 254.5 244.3 253.9 244.6C253.2 244.8 252.6 245.1 252 245.4C251.4 245.7 250.8 246.1 250.2 246.4C249.7 246.8 249.1 247.2 248.6 247.6C248.1 248 247.6 248.5 247.1 249C246.7 249.4 246.2 249.9 245.8 250.4C245.4 250.9 245 251.5 244.7 252C244.3 252.5 244 253.1 243.7 253.7C243.4 254.3 243.2 254.8 243 255.4C242.8 256 242.6 256.6 242.4 257.3C242.3 257.9 242.2 258.5 242.1 259.1C242 259.7 242 260.3 242 261C242 261.7 242 262.4 242.1 263.1C242.2 263.7 242.3 264.4 242.4 265.1C242.6 265.8 242.8 266.4 243 267.1C243.2 267.7 243.4 268.4 243.7 269C244 269.6 244.3 270.3 244.7 270.9C245 271.4 245.4 272 245.8 272.6C246.2 273.1 246.7 273.7 247.1 274.2C247.6 274.7 248.1 275.2 248.6 275.6C249.1 276.1 249.7 276.5 250.2 276.9C250.8 277.3 251.4 277.7 252 278.1C252.6 278.4 253.2 278.7 253.9 279C254.5 279.3 255.2 279.5 255.8 279.7C256.5 279.9 257.2 280.1 257.8 280.3C258.5 280.4 259.2 280.5 259.9 280.6C260.6 280.7 261.7 280.7 262 280.7M262 227C261.3 227 259.1 227.1 257.6 227.2C256.2 227.3 254.7 227.5 253.3 227.7C251.8 228 250.4 228.3 249 228.7C247.6 229 246.3 229.5 244.9 229.9C243.6 230.4 242.3 231 241 231.6C239.7 232.1 238.5 232.8 237.3 233.5C236.1 234.2 235 234.9 233.9 235.7C232.8 236.5 231.8 237.4 230.8 238.2C229.8 239.1 228.9 240.1 228 241C227.2 242 226.4 243 225.6 244C224.9 245 224.2 246.1 223.6 247.2C223 248.3 222.5 249.4 222.1 250.5C221.6 251.6 221.2 252.8 220.9 253.9C220.6 255.1 220.4 256.3 220.2 257.4C220.1 258.6 220 259.7 220 261C220 262.3 220.1 263.8 220.2 265.2C220.4 266.6 220.6 268 220.9 269.4C221.2 270.8 221.6 272.2 222.1 273.5C222.5 274.9 223 276.2 223.6 277.5C224.2 278.8 224.9 280 225.6 281.2C226.4 282.5 227.2 283.7 228 284.8C228.9 285.9 229.8 287.1 230.8 288.1C231.8 289.1 232.8 290.2 233.9 291.1C235 292 236.1 292.9 237.3 293.8C238.5 294.6 239.7 295.4 241 296.1C242.3 296.8 243.6 297.4 244.9 298C246.3 298.6 247.6 299.1 249 299.5C250.4 300 251.8 300.3 253.3 300.6C254.7 300.9 256.2 301.1 257.6 301.3C259.1 301.4 261.3 301.5 262 301.5M262 213C260.9 213 257.6 213.1 255.4 213.3C253.2 213.4 251 213.7 248.9 214C246.8 214.4 244.6 214.8 242.5 215.3C240.4 215.9 238.4 216.5 236.4 217.1C234.4 217.8 232.4 218.6 230.5 219.4C228.6 220.3 226.7 221.2 225 222.2C223.2 223.2 221.5 224.2 219.8 225.3C218.2 226.4 216.7 227.6 215.2 228.9C213.7 230.1 212.3 231.4 211 232.8C209.7 234.1 208.5 235.6 207.4 237C206.3 238.4 205.3 239.9 204.4 241.5C203.6 243 202.8 244.6 202.1 246.2C201.4 247.8 200.8 249.4 200.4 251C199.9 252.7 199.6 254.3 199.3 256C199.1 257.6 199 259.1 199 261C199 262.9 199.1 265.3 199.3 267.4C199.6 269.5 199.9 271.7 200.4 273.8C200.8 275.9 201.4 277.9 202.1 280C202.8 282 203.6 284 204.4 286C205.3 287.9 206.3 289.8 207.4 291.7C208.5 293.6 209.7 295.4 211 297.1C212.3 298.8 213.7 300.5 215.2 302.1C216.7 303.7 218.2 305.2 219.8 306.6C221.5 308.1 223.2 309.4 225 310.7C226.7 311.9 228.6 313.1 230.5 314.2C232.4 315.2 234.4 316.2 236.4 317.1C238.4 318 240.4 318.7 242.5 319.4C244.6 320.1 246.8 320.6 248.9 321.1C251 321.5 253.2 321.8 255.4 322.1C257.6 322.3 260.9 322.3 262 322.4M262 201C260.5 201.1 256.1 201.1 253.2 201.3C250.2 201.5 247.3 201.9 244.4 202.3C241.6 202.7 238.7 203.3 235.9 203.9C233.1 204.6 230.3 205.3 227.6 206.2C224.9 207 222.3 208 219.8 209C217.2 210.1 214.7 211.2 212.3 212.5C210 213.7 207.6 215 205.5 216.4C203.3 217.8 201.2 219.3 199.2 220.9C197.2 222.4 195.4 224 193.6 225.7C191.9 227.4 190.3 229.2 188.8 231C187.3 232.8 186 234.7 184.8 236.6C183.6 238.5 182.5 240.5 181.6 242.5C180.7 244.4 180 246.5 179.3 248.5C178.7 250.6 178.3 252.6 178 254.7C177.7 256.8 177.5 258.5 177.5 261C177.5 263.5 177.7 266.8 178 269.6C178.3 272.5 178.7 275.3 179.3 278.2C180 281 180.7 283.8 181.6 286.5C182.5 289.2 183.6 291.9 184.8 294.6C186 297.2 187.3 299.8 188.8 302.2C190.3 304.7 191.9 307.2 193.6 309.5C195.4 311.8 197.2 314.1 199.2 316.2C201.2 318.3 203.3 320.4 205.5 322.3C207.6 324.2 210 326.1 212.3 327.7C214.7 329.4 217.2 331 219.8 332.4C222.3 333.9 224.9 335.2 227.6 336.4C230.3 337.5 233.1 338.6 235.9 339.5C238.7 340.4 241.6 341.1 244.4 341.7C247.3 342.3 250.2 342.7 253.2 343C256.1 343.3 260.5 343.4 262 343.5M262 190.6C260.2 190.7 254.7 190.7 251.1 191C247.5 191.2 243.8 191.6 240.3 192.1C236.7 192.6 233.2 193.3 229.7 194C226.2 194.8 222.8 195.7 219.5 196.7C216.2 197.7 212.9 198.8 209.8 200C206.6 201.3 203.5 202.6 200.6 204C197.6 205.5 194.8 207 192.1 208.7C189.4 210.3 186.8 212.1 184.3 213.9C181.9 215.7 179.6 217.6 177.5 219.6C175.3 221.6 173.3 223.7 171.5 225.8C169.7 227.9 168 230.1 166.5 232.4C165.1 234.6 163.7 236.9 162.6 239.2C161.5 241.6 160.5 244 159.8 246.4C159 248.8 158.5 251.2 158.1 253.6C157.7 256.1 157.5 257.9 157.5 261C157.5 264.1 157.7 268.4 158.1 272.1C158.5 275.8 159 279.4 159.8 283C160.5 286.7 161.5 290.2 162.6 293.8C163.7 297.3 165.1 300.7 166.5 304.1C168 307.5 169.7 310.8 171.5 314C173.3 317.2 175.3 320.3 177.5 323.3C179.6 326.3 181.9 329.2 184.3 331.9C186.8 334.7 189.4 337.3 192.1 339.8C194.8 342.2 197.6 344.6 200.6 346.8C203.5 348.9 206.6 351 209.8 352.8C212.9 354.6 216.2 356.3 219.5 357.8C222.8 359.3 226.2 360.7 229.7 361.8C233.2 363 236.7 363.9 240.3 364.7C243.8 365.5 247.5 366 251.1 366.4C254.7 366.8 260.2 366.9 262 367M262 180C259.8 180.1 253.3 180.1 249 180.4C244.7 180.7 240.4 181.2 236.1 181.8C231.9 182.4 227.7 183.1 223.5 184C219.4 184.8 215.3 185.9 211.4 187C207.4 188.2 203.5 189.4 199.8 190.9C196 192.3 192.3 193.8 188.8 195.5C185.3 197.1 181.9 198.9 178.7 200.8C175.5 202.7 172.4 204.7 169.5 206.8C166.6 208.9 163.8 211.1 161.3 213.4C158.7 215.7 156.3 218.1 154.2 220.5C152 222.9 150 225.5 148.3 228.1C146.5 230.6 144.9 233.3 143.6 236C142.3 238.7 141.1 241.4 140.2 244.2C139.3 246.9 138.6 249.7 138.2 252.5C137.7 255.3 137.5 257.3 137.5 261C137.5 264.7 137.7 270.1 138.2 274.6C138.6 279.1 139.3 283.6 140.2 288C141.1 292.5 142.3 296.9 143.6 301.2C144.9 305.5 146.5 309.7 148.3 313.9C150 318 152 322.1 154.2 326C156.3 329.9 158.7 333.7 161.3 337.4C163.8 341.1 166.6 344.6 169.5 348C172.4 351.4 175.5 354.6 178.7 357.6C181.9 360.6 185.3 363.5 188.8 366.2C192.3 368.8 196 371.3 199.8 373.6C203.5 375.8 207.4 377.9 211.4 379.8C215.3 381.6 219.4 383.2 223.5 384.6C227.7 386 231.9 387.2 236.1 388.2C240.4 389.1 244.7 389.8 249 390.3C253.3 390.8 259.8 390.9 262 391M262 172.4C259.5 172.5 251.9 172.6 246.9 172.9C241.9 173.2 236.9 173.7 232 174.3C227 175 222.1 175.8 217.3 176.7C212.6 177.7 207.8 178.8 203.2 180.1C198.6 181.3 194.1 182.7 189.8 184.3C185.4 185.8 181.1 187.5 177.1 189.3C173 191.1 169.1 193.1 165.3 195.2C161.6 197.2 158 199.4 154.6 201.7C151.2 204 148.1 206.4 145.1 208.9C142.1 211.4 139.4 214 136.9 216.7C134.3 219.4 132 222.1 130 225C127.9 227.8 126.1 230.7 124.6 233.6C123 236.6 121.7 239.6 120.7 242.6C119.6 245.6 118.8 248.7 118.3 251.7C117.8 254.8 117.5 256.7 117.5 261C117.5 265.3 117.8 271.9 118.3 277.4C118.8 282.8 119.6 288.2 120.7 293.5C121.7 298.9 123 304.2 124.6 309.4C126.1 314.5 127.9 319.7 130 324.7C132 329.6 134.3 334.5 136.9 339.2C139.4 344 142.1 348.6 145.1 353C148.1 357.4 151.2 361.7 154.6 365.7C158 369.8 161.6 373.7 165.3 377.3C169.1 381 173 384.4 177.1 387.6C181.1 390.8 185.4 393.8 189.8 396.5C194.1 399.3 198.6 401.8 203.2 404C207.8 406.2 212.6 408.2 217.3 409.8C222.1 411.5 227 412.9 232 414.1C236.9 415.2 241.9 416.1 246.9 416.6C251.9 417.2 259.5 417.4 262 417.5M262 172.4C259.2 172.5 250.6 172.6 245 172.9C239.3 173.2 233.7 173.7 228.1 174.3C222.6 175 217 175.8 211.6 176.7C206.2 177.7 200.9 178.8 195.7 180.1C190.5 181.3 185.4 182.7 180.5 184.3C175.6 185.8 170.8 187.5 166.2 189.3C161.6 191.1 157.2 193.1 152.9 195.2C148.7 197.2 144.7 199.4 140.9 201.7C137.1 204 133.5 206.4 130.1 208.9C126.8 211.4 123.7 214 120.8 216.7C118 219.4 115.4 222.1 113.1 225C110.8 227.8 108.7 230.7 107 233.6C105.2 236.6 103.7 239.6 102.6 242.6C101.4 245.6 100.5 248.7 99.9 251.7C99.3 254.8 99 256.2 99 261C99 265.8 99.3 274.1 99.9 280.6C100.5 287.1 101.4 293.6 102.6 300C103.7 306.4 105.2 312.8 107 319C108.7 325.2 110.8 331.4 113.1 337.4C115.4 343.3 118 349.2 120.8 354.9C123.7 360.5 126.8 366.1 130.1 371.4C133.5 376.6 137.1 381.8 140.9 386.6C144.7 391.5 148.7 396.1 152.9 400.5C157.2 404.9 161.6 409 166.2 412.9C170.8 416.7 175.6 420.3 180.5 423.6C185.4 426.9 190.5 429.9 195.7 432.5C200.9 435.2 206.2 437.5 211.6 439.6C217 441.6 222.6 443.3 228.1 444.6C233.7 446 239.3 447 245 447.7C250.6 448.4 259.2 448.6 262 448.8M262 172.4C258.9 172.5 249.5 172.6 243.2 172.9C237 173.2 230.8 173.7 224.7 174.3C218.6 175 212.5 175.8 206.5 176.7C200.6 177.7 194.7 178.8 189 180.1C183.3 181.3 177.7 182.7 172.2 184.3C166.8 185.8 161.6 187.5 156.5 189.3C151.4 191.1 146.5 193.1 141.9 195.2C137.2 197.2 132.8 199.4 128.6 201.7C124.4 204 120.5 206.4 116.8 208.9C113.1 211.4 109.7 214 106.5 216.7C103.4 219.4 100.6 222.1 98 225C95.5 227.8 93.2 230.7 91.3 233.6C89.4 236.6 87.7 239.6 86.4 242.6C85.1 245.6 84.1 248.7 83.5 251.7C82.8 254.8 82.5 255.9 82.5 261C82.5 266.1 82.8 275.4 83.5 282.6C84.1 289.7 85.1 296.9 86.4 303.9C87.7 311 89.4 318 91.3 324.8C93.2 331.7 95.5 338.4 98 345C100.6 351.6 103.4 358 106.5 364.2C109.7 370.5 113.1 376.6 116.8 382.4C120.5 388.2 124.4 393.8 128.6 399.2C132.8 404.5 137.2 409.6 141.9 414.5C146.5 419.3 151.4 423.8 156.5 428.1C161.6 432.3 166.8 436.2 172.2 439.8C177.7 443.4 183.3 446.7 189 449.6C194.7 452.6 200.6 455.2 206.5 457.4C212.5 459.6 218.6 461.5 224.7 463C230.8 464.5 237 465.6 243.2 466.4C249.5 467.1 258.9 467.3 262 467.5M262 172.4C258.7 172.5 248.7 172.6 242.1 172.9C235.6 173.2 229 173.7 222.5 174.3C216 175 209.6 175.8 203.3 176.7C197 177.7 190.8 178.8 184.7 180.1C178.7 181.3 172.7 182.7 167 184.3C161.3 185.8 155.7 187.5 150.3 189.3C145 191.1 139.8 193.1 134.9 195.2C129.9 197.2 125.2 199.4 120.8 201.7C116.4 204 112.2 206.4 108.3 208.9C104.4 211.4 100.8 214 97.5 216.7C94.1 219.4 91.1 222.1 88.4 225C85.7 227.8 83.3 230.7 81.3 233.6C79.3 236.6 77.5 239.6 76.2 242.6C74.8 245.6 73.7 248.7 73 251.7C72.3 254.8 72 255.6 72 261C72 266.4 72.3 276.7 73 284.4C73.7 292.2 74.8 299.9 76.2 307.6C77.5 315.2 79.3 322.8 81.3 330.2C83.3 337.6 85.7 345 88.4 352.1C91.1 359.2 94.1 366.2 97.5 373C100.8 379.8 104.4 386.3 108.3 392.7C112.2 399 116.4 405.1 120.8 410.9C125.2 416.7 129.9 422.2 134.9 427.5C139.8 432.7 145 437.6 150.3 442.2C155.7 446.8 161.3 451.1 167 455C172.7 458.9 178.7 462.5 184.7 465.6C190.8 468.8 197 471.6 203.3 474C209.6 476.4 216 478.5 222.5 480.1C229 481.7 235.6 483 242.1 483.8C248.7 484.6 258.7 484.8 262 485M262 172.4C258.6 172.5 248.2 172.6 241.4 172.9C234.6 173.2 227.8 173.7 221 174.3C214.3 175 207.7 175.8 201.1 176.7C194.6 177.7 188.1 178.8 181.9 180.1C175.6 181.3 169.4 182.7 163.5 184.3C157.6 185.8 151.8 187.5 146.2 189.3C140.7 191.1 135.3 193.1 130.2 195.2C125.1 197.2 120.2 199.4 115.6 201.7C111 204 106.7 206.4 102.6 208.9C98.6 211.4 94.8 214 91.4 216.7C88 219.4 84.8 222.1 82 225C79.2 227.8 76.8 230.7 74.6 233.6C72.5 236.6 70.7 239.6 69.3 242.6C67.9 245.6 66.8 248.7 66.1 251.7C65.4 254.8 65 255.2 65 261C65 266.8 65.4 277.9 66.1 286.2C66.8 294.6 67.9 303 69.3 311.2C70.7 319.4 72.5 327.6 74.6 335.6C76.8 343.6 79.2 351.5 82 359.2C84.8 366.9 88 374.5 91.4 381.7C94.8 389 98.6 396.1 102.6 403C106.7 409.8 111 416.3 115.6 422.6C120.2 428.8 125.1 434.8 130.2 440.5C135.3 446.1 140.7 451.4 146.2 456.4C151.8 461.3 157.6 465.9 163.5 470.1C169.4 474.4 175.6 478.2 181.9 481.6C188.1 485 194.6 488.1 201.1 490.7C207.7 493.3 214.3 495.5 221 497.2C227.8 499 234.6 500.3 241.4 501.2C248.2 502.1 258.6 502.3 262 502.5M262 172.4C258.5 172.5 248 172.6 241 172.9C234 173.2 227.1 173.7 220.2 174.3C213.4 175 206.5 175.8 199.9 176.7C193.2 177.7 186.6 178.8 180.2 180.1C173.8 181.3 167.6 182.7 161.5 184.3C155.4 185.8 149.5 187.5 143.9 189.3C138.2 191.1 132.7 193.1 127.5 195.2C122.3 197.2 117.3 199.4 112.6 201.7C107.9 204 103.5 206.4 99.4 208.9C95.3 211.4 91.4 214 87.9 216.7C84.4 219.4 81.2 222.1 78.4 225C75.5 227.8 73 230.7 70.8 233.6C68.7 236.6 66.8 239.6 65.4 242.6C63.9 245.6 62.8 248.7 62.1 251.7C61.4 254.8 61 255 61 261C61 267 61.4 279 62.1 287.9C62.8 296.9 63.9 305.8 65.4 314.6C66.8 323.4 68.7 332.1 70.8 340.6C73 349.2 75.5 357.6 78.4 365.8C81.2 374 84.4 382.1 87.9 389.9C91.4 397.7 95.3 405.2 99.4 412.5C103.5 419.8 107.9 426.8 112.6 433.5C117.3 440.1 122.3 446.5 127.5 452.5C132.7 458.6 138.2 464.2 143.9 469.5C149.5 474.8 155.4 479.7 161.5 484.2C167.6 488.7 173.8 492.8 180.2 496.5C186.6 500.1 193.2 503.4 199.9 506.1C206.5 508.9 213.4 511.3 220.2 513.1C227.1 515 234 516.4 241 517.3C248 518.3 258.5 518.5 262 518.8M262 172.4C258.5 172.5 247.8 172.6 240.7 172.9C233.7 173.2 226.6 173.7 219.7 174.3C212.8 175 205.9 175.8 199.1 176.7C192.4 177.7 185.7 178.8 179.2 180.1C172.8 181.3 166.4 182.7 160.2 184.3C154.1 185.8 148.1 187.5 142.4 189.3C136.6 191.1 131.1 193.1 125.8 195.2C120.6 197.2 115.5 199.4 110.8 201.7C106 204 101.5 206.4 97.4 208.9C93.2 211.4 89.3 214 85.8 216.7C82.2 219.4 79 222.1 76.1 225C73.2 227.8 70.7 230.7 68.5 233.6C66.3 236.6 64.4 239.6 62.9 242.6C61.5 245.6 60.4 248.7 59.6 251.7C58.9 254.8 58.5 254.7 58.5 261C58.5 267.3 58.9 280.2 59.6 289.7C60.4 299.3 61.5 308.8 62.9 318.2C64.4 327.5 66.3 336.9 68.5 346C70.7 355.1 73.2 364.1 76.1 372.9C79 381.6 82.2 390.2 85.8 398.5C89.3 406.8 93.2 414.9 97.4 422.6C101.5 430.4 106 437.9 110.8 445C115.5 452.1 120.6 459 125.8 465.4C131.1 471.8 136.6 477.8 142.4 483.5C148.1 489.1 154.1 494.4 160.2 499.2C166.4 503.9 172.8 508.3 179.2 512.2C185.7 516.1 192.4 519.6 199.1 522.5C205.9 525.5 212.8 528 219.7 530C226.6 532 233.7 533.5 240.7 534.5C247.8 535.5 258.5 535.7 262 536M262 172.4C258.4 172.5 247.7 172.6 240.6 172.9C233.5 173.2 226.4 173.7 219.4 174.3C212.4 175 205.4 175.8 198.7 176.7C191.9 177.7 185.1 178.8 178.6 180.1C172.1 181.3 165.7 182.7 159.5 184.3C153.3 185.8 147.3 187.5 141.5 189.3C135.7 191.1 130.1 193.1 124.8 195.2C119.5 197.2 114.4 199.4 109.7 201.7C104.9 204 100.3 206.4 96.2 208.9C92 211.4 88 214 84.5 216.7C80.9 219.4 77.6 222.1 74.7 225C71.8 227.8 69.2 230.7 67 233.6C64.8 236.6 63 239.6 61.5 242.6C60 245.6 58.9 248.7 58.1 251.7C57.4 254.8 57 254.4 57 261C57 267.6 57.4 281.5 58.1 291.6C58.9 301.7 60 311.9 61.5 321.9C63 331.8 64.8 341.8 67 351.5C69.2 361.2 71.8 370.8 74.7 380.1C77.6 389.4 80.9 398.5 84.5 407.4C88 416.2 92 424.8 96.2 433.1C100.3 441.3 104.9 449.3 109.7 456.9C114.4 464.5 119.5 471.7 124.8 478.6C130.1 485.4 135.7 491.8 141.5 497.8C147.3 503.8 153.3 509.4 159.5 514.5C165.7 519.6 172.1 524.3 178.6 528.4C185.1 532.6 191.9 536.3 198.7 539.4C205.4 542.6 212.4 545.2 219.4 547.4C226.4 549.5 233.5 551.1 240.6 552.1C247.7 553.2 258.4 553.5 262 553.8M262 261L259.4 243.2M262 261L256.8 243.6L251.1 228.2L245.7 214.6L240.1 203L235 193L229.8 182.8L224.6 175.4L219.8 175.4L215.5 175.4L212.8 175.4L211 175.4L210 175.4L209.3 175.4L208.9 175.4M262 261L254.3 244.4M262 261L252 245.4L241 231.6L230.5 219.4L219.8 209L209.8 200L199.8 190.9L189.8 184.3L180.5 184.3L172.2 184.3L167 184.3L163.5 184.3L161.5 184.3L160.2 184.3L159.5 184.3M262 261L249.8 246.7M262 261L247.9 248.3L232.3 237L217.5 227.1L202.2 218.6L188.1 211.2L174 203.7L159.8 198.4L146.7 198.4L135.1 198.4L127.6 198.4L122.7 198.4L119.9 198.4L118.1 198.4L117 198.4M262 261L246.1 250M262 261L244.7 252L225.6 244L207.4 237L188.8 231L171.5 225.8L154.2 220.5L136.9 216.7L120.8 216.7L106.5 216.7L97.5 216.7L91.4 216.7L87.9 216.7L85.8 216.7L84.5 216.7M111.4 227.1L96.2 227.1L86.5 227.1L80 227.1L76.3 227.1L74 227.1L72.6 227.1M262 261L243.5 254.1M262 261L242.7 256.3L221.4 252.2L201.1 248.6L180.4 245.5L161.1 242.8L141.7 240L122.4 238.1L104.6 238.1L88.6 238.1L78.5 238.1L71.7 238.1L67.8 238.1L65.4 238.1L64 238.1M100.4 249.4L84 249.4L73.6 249.4L66.7 249.4L62.7 249.4L60.2 249.4L58.8 249.4M262 261L242.2 258.7M262 261L242 261L220 261L199 261L177.5 261L157.5 261L137.5 261L117.5 261L99 261L82.5 261L72 261L65 261L61 261L58.5 261L57 261M100.4 285.5L84 288L73.6 290.2L66.7 292.5L62.7 294.6L60.2 296.9L58.8 299.2M262 261L242.2 263.6M262 261L242.7 266.1L221.4 271.5L201.1 276.9L180.4 282.4L161.1 288.4L141.7 294.6L122.4 301.5L104.6 309.6L88.6 314.4L78.5 319L71.7 323.5L67.8 327.7L65.4 332.2L64 336.8M111.4 332.8L96.2 340L86.5 346.7L80 353.4L76.3 359.6L74 366.2L72.6 373M262 261L243.5 268.5M262 261L244.7 270.9L225.6 281.2L207.4 291.7L188.8 302.2L171.5 314L154.2 326L136.9 339.2L120.8 354.9L106.5 364.2L97.5 373L91.4 381.7L87.9 389.9L85.8 398.5L84.5 407.4M132.7 375.3L119.6 386.7L111.3 397.4L105.7 408L102.5 417.9L100.6 428.4L99.4 439.2M262 261L246.1 273M262 261L247.9 274.9L232.3 289.6L217.5 304.4L202.2 319.3L188.1 336L174 352.9L159.8 371.7L146.7 393.8L135.1 407L127.6 419.4L122.7 431.8L119.9 443.3L118.1 455.5L117 468M162.8 410L152.7 424.8L146.3 438.7L142.1 452.6L139.6 465.5L138.1 479.2L137.2 493.3M262 261L249.8 276.6M262 261L252 278.1L241 296.1L230.5 314.2L219.8 332.4L209.8 352.8L199.8 373.6L189.8 396.5L180.5 423.6L172.2 439.8L167 455L163.5 470.1L161.5 484.2L160.2 499.2L159.5 514.5M199.6 434.5L193.3 451.8L189.3 467.9L186.6 484.1L185.1 499.1L184.1 515.1L183.5 531.5M262 261L254.3 279.2M262 261L256.8 280L251.1 300.1L245.7 320.3L240.1 340.7L235 363.4L229.8 386.6L224.6 412.2L219.8 442.4L215.5 460.5L212.8 477.4L211 494.3L210 510L209.3 526.6L208.9 543.8M240.7 447.1L238.6 465.7L237.2 483.1L236.3 500.4L235.8 516.5L235.4 533.6L235.2 551.2M262 261L259.4 280.5M528 419L532 448.75L537 467.5L542.5 502.5M644 502.5L648 467.5L652 448.75M351 504L356 467.5L361 448.75M832.5 505L827 467.5L822 448.75" stroke="#000" stroke-opacity="0.8" stroke-width="0.9" fill="none"/>
</g>
<path d="M262 172.4L349.5 172.4L350 172.4 A97.9 73.5 0 0 1 544 172.4L640.5 172.4A97.9 73.5 0 0 1 834.5 172.4L920.3 172.4 L920.3 554L846 554 L832.5 505A109.5 109.5 0 0 0 644 502.5L630 554 L555 554 L542.5 502.5A114.6 114.6 0 0 0 351 504L339 554 L289.5 555C285.4 554.9 273.2 554.9 265 554.5C256.8 554.1 248.3 553.4 240 552.5C231.7 551.6 222 550.4 215 549C208 547.6 203.8 545.9 198 544C192.2 542.1 186.3 540.1 180 537.5C173.7 534.9 166.7 531.8 160 528.5C153.3 525.2 147 521.9 140 517.5C133 513.1 124.7 507.4 118 502C111.3 496.6 105.7 490.7 100 485C94.3 479.3 88.6 473.8 84 468C79.4 462.2 76 456.3 72.5 450C69 443.7 65.6 435.8 63 430C60.4 424.2 58.4 420.3 57 415C55.6 409.7 54.8 404.7 54.5 398C54.2 391.3 54.5 383.5 55 375C55.5 366.5 56 355.8 57.5 347C59 338.2 61.1 330.5 64 322C66.9 313.5 70.5 304.7 75 296C79.5 287.3 86.2 277.7 91 270C95.8 262.3 98.8 256.7 104 250C109.2 243.3 116.3 235.5 122.5 230C128.7 224.5 134.6 221.2 141 217C147.4 212.8 154.7 208.2 161 204.6C167.3 201 173.3 198.4 179 195.7C184.7 193 189.7 190.6 195 188.5C200.3 186.4 205.7 184.9 211 183C216.3 181.1 221.1 178.6 227 177C232.9 175.4 240.7 174 246.5 173.2C252.3 172.4 259.4 172.5 262 172.4Z" stroke="#5a0000" stroke-width="1" fill="none"/>
<ellipse cx="60" cy="318" rx="3.4" ry="4" fill="#6a3410"/>
<ellipse cx="56.5" cy="337" rx="3.4" ry="4" fill="#6a3410"/>
<ellipse cx="53.5" cy="357" rx="3.4" ry="4" fill="#6a3410"/>
<ellipse cx="52" cy="378" rx="3.4" ry="4" fill="#6a3410"/>
<ellipse cx="52" cy="400" rx="3.4" ry="4" fill="#6a3410"/>
<ellipse cx="57" cy="423" rx="4.6" ry="3.6" fill="#5a2a0a"/>
<path d="M57 421v-7" stroke="#5a2a0a" stroke-width="1.6"/>
<ellipse cx="64" cy="444" rx="4.6" ry="3.6" fill="#5a2a0a"/>
<path d="M64 442v-7" stroke="#5a2a0a" stroke-width="1.6"/>
<ellipse cx="75" cy="465" rx="4.6" ry="3.6" fill="#5a2a0a"/>
<path d="M75 463v-7" stroke="#5a2a0a" stroke-width="1.6"/>
<ellipse cx="89" cy="484" rx="4.6" ry="3.6" fill="#5a2a0a"/>
<path d="M89 482v-7" stroke="#5a2a0a" stroke-width="1.6"/>
<ellipse cx="105" cy="503" rx="4.6" ry="3.6" fill="#5a2a0a"/>
<path d="M105 501v-7" stroke="#5a2a0a" stroke-width="1.6"/>
<ellipse cx="125" cy="518" rx="4.6" ry="3.6" fill="#5a2a0a"/>
<path d="M125 516v-7" stroke="#5a2a0a" stroke-width="1.6"/>
<ellipse cx="147" cy="532" rx="4.6" ry="3.6" fill="#5a2a0a"/>
<path d="M147 530v-7" stroke="#5a2a0a" stroke-width="1.6"/>
<ellipse cx="172" cy="541" rx="4.6" ry="3.6" fill="#5a2a0a"/>
<path d="M172 539v-7" stroke="#5a2a0a" stroke-width="1.6"/>
<ellipse cx="196" cy="552" rx="4.6" ry="3.6" fill="#5a2a0a"/>
<path d="M196 550v-7" stroke="#5a2a0a" stroke-width="1.6"/>
<ellipse cx="223" cy="558" rx="4.6" ry="3.6" fill="#5a2a0a"/>
<path d="M223 556v-7" stroke="#5a2a0a" stroke-width="1.6"/>
<ellipse cx="250" cy="561" rx="4.6" ry="3.6" fill="#5a2a0a"/>
<path d="M250 559v-7" stroke="#5a2a0a" stroke-width="1.6"/>
<ellipse cx="276" cy="562" rx="4.6" ry="3.6" fill="#5a2a0a"/>
<path d="M276 560v-7" stroke="#5a2a0a" stroke-width="1.6"/>
<ellipse cx="302" cy="562" rx="4.6" ry="3.6" fill="#5a2a0a"/>
<path d="M302 560v-7" stroke="#5a2a0a" stroke-width="1.6"/>
<ellipse cx="327" cy="562" rx="4.6" ry="3.6" fill="#5a2a0a"/>
<path d="M327 560v-7" stroke="#5a2a0a" stroke-width="1.6"/>
<ellipse cx="567" cy="561" rx="4.6" ry="3.6" fill="#5a2a0a"/>
<path d="M567 559v-7" stroke="#5a2a0a" stroke-width="1.6"/>
<ellipse cx="592" cy="561" rx="4.6" ry="3.6" fill="#5a2a0a"/>
<path d="M592 559v-7" stroke="#5a2a0a" stroke-width="1.6"/>
<ellipse cx="617" cy="560" rx="4.6" ry="3.6" fill="#5a2a0a"/>
<path d="M617 558v-7" stroke="#5a2a0a" stroke-width="1.6"/>
<ellipse cx="858" cy="560" rx="4.6" ry="3.6" fill="#5a2a0a"/>
<path d="M858 558v-7" stroke="#5a2a0a" stroke-width="1.6"/>
<ellipse cx="883" cy="560" rx="4.6" ry="3.6" fill="#5a2a0a"/>
<path d="M883 558v-7" stroke="#5a2a0a" stroke-width="1.6"/>
<ellipse cx="907.5" cy="560" rx="4.6" ry="3.6" fill="#5a2a0a"/>
<path d="M907.5 558v-7" stroke="#5a2a0a" stroke-width="1.6"/>
<g font-family="Liberation Sans,sans-serif" font-size="8" font-weight="bold" text-anchor="middle" letter-spacing="-0.3">
<text x="380" y="188.6" fill="#000" transform="rotate(-80 380 186)">-0,1</text>
<text x="392.5" y="195.1" fill="#000" transform="rotate(-80 392.5 192.5)">-0,1</text>
<text x="404.5" y="202.6" fill="#000" transform="rotate(-80 404.5 200)">-0,2</text>
<text x="417.5" y="211.3" fill="#000" transform="rotate(-80 417.5 208.7)">-0,2</text>
<text x="430" y="225.1" fill="#000" transform="rotate(-85 430 222.5)">-0,3</text>
<text x="466" y="225.1" fill="#000" transform="rotate(-85 466 222.5)">-0,3</text>
<text x="478" y="211.3" fill="#000" transform="rotate(-85 478 208.7)">-0,2</text>
<text x="491" y="202.6" fill="#000" transform="rotate(-80 491 200)">-0,2</text>
<text x="503.7" y="195.1" fill="#000" transform="rotate(-80 503.7 192.5)">-0,1</text>
<text x="516" y="188.6" fill="#000" transform="rotate(-80 516 186)">-0,1</text>
<text x="447.5" y="238.6" fill="#000" transform="rotate(-85 447.5 236)">-0,4</text>
<text x="670" y="188.6" fill="#000" transform="rotate(-80 670 186)">-0,1</text>
<text x="682.5" y="195.1" fill="#000" transform="rotate(-80 682.5 192.5)">-0,1</text>
<text x="695" y="202.6" fill="#000" transform="rotate(-80 695 200)">-0,2</text>
<text x="707.5" y="211.3" fill="#000" transform="rotate(-80 707.5 208.7)">-0,3</text>
<text x="720.5" y="225.1" fill="#000" transform="rotate(-85 720.5 222.5)">-0,3</text>
<text x="737.5" y="239.6" fill="#000" transform="rotate(-88 737.5 237)">-0,3</text>
<text x="757" y="221.6" fill="#000" transform="rotate(-80 757 219)">-0,2</text>
<text x="770" y="213.6" fill="#000" transform="rotate(-80 770 211)">-0,1</text>
<text x="782" y="205.6" fill="#000" transform="rotate(-80 782 203)">-0,1</text>
<text x="437" y="303.6" fill="#000">-0,4</text>
<text x="420" y="325.6" fill="#000">-0,3</text>
<text x="456" y="325.6" fill="#000">-0,3</text>
<text x="407" y="346.6" fill="#000">-0,2</text>
<text x="467" y="346.6" fill="#000">-0,2</text>
<text x="394" y="369.6" fill="#000">-0,2</text>
<text x="480" y="369.6" fill="#000">-0,2</text>
<text x="381" y="393.6" fill="#000">-0,1</text>
<text x="490" y="393.6" fill="#000">-0,1</text>
<text x="369" y="420.6" fill="#000">-0,1</text>
<text x="507" y="420.6" fill="#000">-0,1</text>
<text x="727" y="303.6" fill="#000">-0,3</text>
<text x="709" y="325.6" fill="#000">-0,3</text>
<text x="747" y="325.6" fill="#000">-0,2</text>
<text x="697" y="346.6" fill="#000">-0,3</text>
<text x="759" y="346.6" fill="#000">-0,1</text>
<text x="686" y="369.6" fill="#000">-0,2</text>
<text x="771" y="369.6" fill="#000">-0,1</text>
<text x="673" y="393.6" fill="#000">-0,1</text>
<text x="660" y="420.6" fill="#000">-0,1</text>
<text x="486.5" y="269.1" fill="#fff" font-weight="normal" font-size="8.6" letter-spacing="0">-0,6</text>
<text x="638" y="269.1" fill="#fff" font-weight="normal" font-size="8.6" letter-spacing="0">-0,5</text>
</g>
<rect x="475.7" y="259.7" width="2.4" height="2.4" fill="none" stroke="#fff" stroke-width="0.8"/>
<rect x="627.7" y="259.7" width="2.4" height="2.4" fill="none" stroke="#fff" stroke-width="0.8"/>
<path d="M580.5 312V332M568 322.5H580" stroke="#b030d0" stroke-width="1.6" fill="none"/>
<path d="M313 550.5l3 3.5l3-3.5M316 554v3" stroke="#b8d020" stroke-width="1.4" fill="none"/><path d="M314.500 556.500h3" stroke="#3050c0" stroke-width="1"/>
</svg>
<div class="abs" id="titlebar"></div>
<div class="abs" id="title">AxisVM (64) X5 R2f</div>
<div class="abs" style="left:100px;top:6px;width:255px;height:8px;background:#d6d6d6;filter:blur(2.2px);opacity:.9"></div>
<div class="abs" style="left:366px;top:6.5px;width:192px;height:7px;background:#dedede;filter:blur(2.2px);opacity:.9"></div>
<div class="abs" id="menubar"></div><div class="abs" id="menuwhite"></div>
<div class="abs mi" style="left:5px"><u>P</u>lik</div><div class="abs mi" style="left:28px"><u>E</u>dycja</div><div class="abs mi" style="left:61px"><u>U</u>stawienia</div><div class="abs mi" style="left:111px"><u>W</u>idok</div><div class="abs mi" style="left:145px"><u>D</u>odatki</div><div class="abs mi" style="left:184px"><u>O</u>kno</div><div class="abs mi" style="left:214px">Po<u>m</u>oc</div>
<div class="abs" id="tb1"></div><div class="abs" id="tabstrip"></div>
<div class="abs tab" style="left:185px;width:49px">Geometria</div><div class="abs tab" style="left:238px;width:43px">Elementy</div><div class="abs tab" style="left:285px;width:50px">Obciążenia</div><div class="abs tab" style="left:338px;width:31px">Siatka</div><div class="abs tab on" style="left:372px;width:38px">Statyka</div><div class="abs tab" style="left:413px;width:53px">Wyboczenie</div><div class="abs tab" style="left:469px;width:66px">Drgania własne</div><div class="abs tab" style="left:539px;width:48px">Dynamika</div><div class="abs tab" style="left:590px;width:97px">Wymiarowanie - Żelbet</div><div class="abs tab" style="left:691px;width:85px">Wymiarowanie - Stal</div><div class="abs tab" style="left:779px;width:102px">Wymiarowanie - Drewno</div><div class="abs tab" style="left:884px;width:92px">Wymiarowanie - Mur</div>
<div class="abs" id="tb2"></div><div class="abs" id="tb2line"></div>
<div class="abs combo" style="left:276px;width:160px;padding-left:17px">Decydujące Min</div>
<div class="abs combo" style="left:440px;width:97px">eZ [mm]</div>
<div class="abs combo" style="left:542px;width:106px">Izopowierzchnie 2D</div>
<div class="abs combo" style="left:651px;width:38px">1</div>
<div class="abs" id="lefttb"></div>
<div class="abs" id="vscroll"></div><div class="abs" id="hscroll"></div><div class="abs" id="status"></div>
<div class="abs panel" style="left:28px;top:84px;width:132px;height:121px;background:#fff"></div><div class="abs" style="left:29px;top:86px;width:118px;height:9px;background:#8faad3"></div><div class="abs" style="left:148px;top:85px;width:11px;height:10px;background:#f0f0f0;border:1px solid #b0b0b0;font-size:10px;line-height:8px;font-weight:bold;text-align:center;color:#000">×</div><div class="abs pt nv" style="left:29px;top:95.5px;width:130px;text-align:center;background:#eef3fa;height:11px;line-height:11px">Analiza liniowa</div><div class="abs" style="left:29px;top:107.0px;width:130px;height:12px;background:#fff"></div><div class="abs pt lab" style="left:32px;top:107.0px">Norma</div><div class="abs" style="left:80px;top:114.0px;width:12px;height:3px;background:#d00000;border-radius:1px"></div><div class="abs pt nv" style="left:94px;top:107.0px">Eurokod-PL</div><div class="abs" style="left:29px;top:119.0px;width:130px;height:12px;background:#e9eff8"></div><div class="abs pt lab" style="left:32px;top:119.0px">Przypadek</div><div class="abs pt nv" style="left:79px;top:119.0px">:</div><div class="abs pt nv" style="left:85px;top:119.0px">Decydujące Min</div><div class="abs" style="left:29px;top:131.1px;width:130px;height:12px;background:#e9eff8"></div><div class="abs pt lab" style="left:32px;top:131.1px">Typ</div><div class="abs pt nv" style="left:79px;top:131.1px">:</div><div class="abs pt nv" style="left:85px;top:131.1px">(SGU Quasi-stała)</div><div class="abs" style="left:29px;top:143.2px;width:130px;height:12px;background:#e9eff8"></div><div class="abs pt lab" style="left:32px;top:143.2px">E (P)</div><div class="abs pt nv" style="left:79px;top:143.2px">:</div><div class="abs pt nv" style="left:85px;top:143.2px">5,02E-7</div><div class="abs" style="left:29px;top:155.2px;width:130px;height:12px;background:#fff"></div><div class="abs pt lab" style="left:32px;top:155.2px">E (W)</div><div class="abs pt nv" style="left:79px;top:155.2px">:</div><div class="abs pt nv" style="left:85px;top:155.2px">5,02E-7</div><div class="abs" style="left:29px;top:167.2px;width:130px;height:12px;background:#e9eff8"></div><div class="abs pt lab" style="left:32px;top:167.2px">E (Eq)</div><div class="abs pt nv" style="left:79px;top:167.2px">:</div><div class="abs pt nv" style="left:85px;top:167.2px">3,22E-11</div><div class="abs" style="left:29px;top:179.3px;width:130px;height:12px;background:#fff"></div><div class="abs pt lab" style="left:32px;top:179.3px">Skład.</div><div class="abs pt nv" style="left:79px;top:179.3px">:</div><div class="abs pt nv" style="left:85px;top:179.3px">eZ [mm]</div><div class="abs" style="left:29px;top:191.4px;width:130px;height:12px;background:#e9eff8"></div><div class="abs pt lab" style="left:32px;top:191.4px">Fragment</div><div class="abs pt nv" style="left:79px;top:191.4px">:</div><div class="abs pt nv" style="left:85px;top:191.4px">Materiały/C25/30</div><div class="abs" style="left:29px;top:106.5px;width:130px;height:1px;background:#b8c0cc"></div><div class="abs" style="left:29px;top:118.6px;width:130px;height:1px;background:#b8c0cc"></div><div class="abs" style="left:29px;top:142.6px;width:130px;height:1px;background:#b8c0cc"></div><div class="abs" style="left:29px;top:178.8px;width:130px;height:1px;background:#b8c0cc"></div>
<div class="abs panel" style="left:927px;top:86px;width:47px;height:243px"></div><div class="abs" style="left:928px;top:87px;width:35px;height:9px;background:#8faad3"></div><div class="abs" style="left:963px;top:87px;width:10px;height:9px;background:#f4f4f4;font-size:9px;line-height:9px;font-weight:bold;text-align:center;color:#000">×</div><div class="abs pt lab" style="left:928px;top:97px;width:45px;text-align:center;line-height:9px;font-size:8.4px">eZ<br>[mm]</div><svg class="abs" style="left:929px;top:120px" width="10" height="10"><rect width="10" height="10" fill="#fff"/><path d="M-2 2L8 12M2 -2L12 8M-2 7L3 12" stroke="#d04040" stroke-width="1"/></svg><div class="abs" style="left:939px;top:124.2px;width:34px;height:1px;background:#c4c4c4"></div><div class="abs" style="left:939px;top:125.2px;width:34px;height:1px;background:#fff"></div><div class="abs pt lab" style="left:940px;top:124.7px;width:30px;text-align:right;font-size:8.6px">0</div><div class="abs" style="left:928.8px;top:131.8px;width:9px;height:8.6px;background:#7a0000"></div><div class="abs" style="left:939px;top:136.2px;width:34px;height:1px;background:#c4c4c4"></div><div class="abs" style="left:939px;top:137.2px;width:34px;height:1px;background:#fff"></div><div class="abs pt lab" style="left:940px;top:136.7px;width:30px;text-align:right;font-size:8.6px">0</div><div class="abs" style="left:928.8px;top:143.8px;width:9px;height:8.6px;background:#b40000"></div><div class="abs" style="left:939px;top:148.2px;width:34px;height:1px;background:#c4c4c4"></div><div class="abs" style="left:939px;top:149.2px;width:34px;height:1px;background:#fff"></div><div class="abs pt lab" style="left:940px;top:148.7px;width:30px;text-align:right;font-size:8.6px">-0,1</div><div class="abs" style="left:928.8px;top:155.8px;width:9px;height:8.6px;background:#de0000"></div><div class="abs" style="left:939px;top:160.3px;width:34px;height:1px;background:#c4c4c4"></div><div class="abs" style="left:939px;top:161.3px;width:34px;height:1px;background:#fff"></div><div class="abs pt lab" style="left:940px;top:160.8px;width:30px;text-align:right;font-size:8.6px">-0,1</div><div class="abs" style="left:928.8px;top:167.9px;width:9px;height:8.6px;background:#ff7400"></div><div class="abs" style="left:939px;top:172.3px;width:34px;height:1px;background:#c4c4c4"></div><div class="abs" style="left:939px;top:173.3px;width:34px;height:1px;background:#fff"></div><div class="abs pt lab" style="left:940px;top:172.8px;width:30px;text-align:right;font-size:8.6px">-0,1</div><div class="abs" style="left:928.8px;top:179.9px;width:9px;height:8.6px;background:#ffb800"></div><div class="abs" style="left:939px;top:184.3px;width:34px;height:1px;background:#c4c4c4"></div><div class="abs" style="left:939px;top:185.3px;width:34px;height:1px;background:#fff"></div><div class="abs pt lab" style="left:940px;top:184.8px;width:30px;text-align:right;font-size:8.6px">-0,2</div><div class="abs" style="left:928.8px;top:191.9px;width:9px;height:8.6px;background:#ffff00"></div><div class="abs" style="left:939px;top:196.3px;width:34px;height:1px;background:#c4c4c4"></div><div class="abs" style="left:939px;top:197.3px;width:34px;height:1px;background:#fff"></div><div class="abs pt lab" style="left:940px;top:196.8px;width:30px;text-align:right;font-size:8.6px">-0,2</div><div class="abs" style="left:928.8px;top:203.9px;width:9px;height:8.6px;background:#4cf400"></div><div class="abs" style="left:939px;top:208.3px;width:34px;height:1px;background:#c4c4c4"></div><div class="abs" style="left:939px;top:209.3px;width:34px;height:1px;background:#fff"></div><div class="abs pt lab" style="left:940px;top:208.8px;width:30px;text-align:right;font-size:8.6px">-0,3</div><div class="abs" style="left:928.8px;top:215.9px;width:9px;height:8.6px;background:#30f0b0"></div><div class="abs" style="left:939px;top:220.4px;width:34px;height:1px;background:#c4c4c4"></div><div class="abs" style="left:939px;top:221.4px;width:34px;height:1px;background:#fff"></div><div class="abs pt lab" style="left:940px;top:220.9px;width:30px;text-align:right;font-size:8.6px">-0,3</div><div class="abs" style="left:928.8px;top:228.0px;width:9px;height:8.6px;background:#04deff"></div><div class="abs" style="left:939px;top:232.4px;width:34px;height:1px;background:#c4c4c4"></div><div class="abs" style="left:939px;top:233.4px;width:34px;height:1px;background:#fff"></div><div class="abs pt lab" style="left:940px;top:232.9px;width:30px;text-align:right;font-size:8.6px">-0,4</div><div class="abs" style="left:928.8px;top:240.0px;width:9px;height:8.6px;background:#08a0ff"></div><div class="abs" style="left:939px;top:244.4px;width:34px;height:1px;background:#c4c4c4"></div><div class="abs" style="left:939px;top:245.4px;width:34px;height:1px;background:#fff"></div><div class="abs pt lab" style="left:940px;top:244.9px;width:30px;text-align:right;font-size:8.6px">-0,4</div><div class="abs" style="left:928.8px;top:252.0px;width:9px;height:8.6px;background:#0048ff"></div><div class="abs" style="left:939px;top:256.4px;width:34px;height:1px;background:#c4c4c4"></div><div class="abs" style="left:939px;top:257.4px;width:34px;height:1px;background:#fff"></div><div class="abs pt lab" style="left:940px;top:256.9px;width:30px;text-align:right;font-size:8.6px">-0,4</div><div class="abs" style="left:928.8px;top:264.0px;width:9px;height:8.6px;background:#0000e6"></div><div class="abs" style="left:939px;top:268.4px;width:34px;height:1px;background:#c4c4c4"></div><div class="abs" style="left:939px;top:269.4px;width:34px;height:1px;background:#fff"></div><div class="abs pt lab" style="left:940px;top:268.9px;width:30px;text-align:right;font-size:8.6px">-0,5</div><div class="abs" style="left:928.8px;top:276.0px;width:9px;height:8.6px;background:#000094"></div><div class="abs" style="left:939px;top:280.5px;width:34px;height:1px;background:#c4c4c4"></div><div class="abs" style="left:939px;top:281.5px;width:34px;height:1px;background:#fff"></div><div class="abs pt lab" style="left:940px;top:281.0px;width:30px;text-align:right;font-size:8.6px">-0,5</div><div class="abs" style="left:928.8px;top:288.1px;width:9px;height:8.6px;background:#00004e"></div><div class="abs" style="left:939px;top:292.5px;width:34px;height:1px;background:#c4c4c4"></div><div class="abs" style="left:939px;top:293.5px;width:34px;height:1px;background:#fff"></div><div class="abs pt lab" style="left:940px;top:293.0px;width:30px;text-align:right;font-size:8.6px">-0,6</div><div class="abs" style="left:939px;top:304.5px;width:34px;height:1px;background:#c4c4c4"></div><svg class="abs" style="left:929px;top:299.8px" width="10" height="10"><rect width="10" height="10" fill="#fff"/><path d="M-2 8L8 -2M2 12L12 2" stroke="#4050d0" stroke-width="1"/></svg><div class="abs" style="left:929px;top:315px;width:18px;height:13px;background:#fff;border:1px solid #9a9a9a;font-family:'DejaVu Sans',sans-serif;font-size:8.4px;line-height:11px;padding-left:2px;color:#222">15</div><div class="abs" style="left:947px;top:316px;width:26px;height:12px;background:repeating-linear-gradient(#e4e4e4 0 1px,#cfcfcf 1px 2px)"></div>
<div class="abs panel" style="left:782px;top:568px;width:202px;height:46px;box-shadow:1.5px 1.5px 0 #7a7a7a"></div><div class="abs" style="left:785px;top:571px;width:9px;height:9px;background:#f4f4f4;border:1px solid #b0b0b0;font-size:10px;line-height:7px;font-weight:bold;text-align:center;color:#000">×</div><div class="abs" style="left:785px;top:580px;width:9px;height:32px;background:#9ab5dc"></div><div class="abs" style="left:798px;top:571px;width:11px;height:41px;background:#cfe3f8;border:1px solid #5b8fd6;border-radius:1px;font-family:'DejaVu Sans',sans-serif;font-weight:bold;font-size:11px;line-height:37px;text-align:center;color:#000">d</div><div class="abs" style="left:892.5px;top:571px;width:11px;height:41px;background:#cfe3f8;border:1px solid #5b8fd6;border-radius:1px;font-family:'DejaVu Sans',sans-serif;font-weight:bold;font-size:11px;line-height:37px;text-align:center;color:#000">d</div><div class="abs" style="left:845px;top:571.1px;width:42px;height:9.6px;background:#fff"></div><div class="abs pt lab" style="left:811px;top:570.3px;line-height:11px">dX[m] :</div><div class="abs pt lab" style="left:847px;top:570.3px;line-height:11px">-15,557</div><div class="abs" style="left:845px;top:581.7px;width:42px;height:9.6px;background:#fff"></div><div class="abs pt lab" style="left:811px;top:580.9px;line-height:11px">dY[m] :</div><div class="abs pt lab" style="left:847px;top:580.9px;line-height:11px">2,399</div><div class="abs" style="left:845px;top:592.3px;width:42px;height:9.6px;background:#fff"></div><div class="abs pt lab" style="left:811px;top:591.5px;line-height:11px">dZ[m] :</div><div class="abs pt lab" style="left:847px;top:591.5px;line-height:11px">0</div><div class="abs" style="left:845px;top:602.9px;width:42px;height:9.6px;background:#fff"></div><div class="abs pt lab" style="left:811px;top:602.1px;line-height:11px">dL[m] :</div><div class="abs pt lab" style="left:847px;top:602.1px;line-height:11px">15,741</div><div class="abs" style="left:940px;top:571.1px;width:41px;height:9.6px;background:#fff"></div><div class="abs pt lab" style="left:905px;top:570.3px;line-height:11px">d r[m] :</div><div class="abs pt lab" style="left:942px;top:570.3px;line-height:11px">15,741</div><div class="abs" style="left:940px;top:581.7px;width:41px;height:9.6px;background:#fff"></div><div class="abs pt lab" style="left:905px;top:580.9px;line-height:11px">d&nbsp; a[°] :</div><div class="abs pt lab" style="left:942px;top:580.9px;line-height:11px">171,23</div><div class="abs" style="left:940px;top:592.3px;width:41px;height:9.6px;background:#fff"></div><div class="abs pt lab" style="left:905px;top:591.5px;line-height:11px">dh[m] :</div><div class="abs pt lab" style="left:942px;top:591.5px;line-height:11px">0</div>
<svg class="abs" width="1000" height="647" viewBox="0 0 1000 647" style="left:0;top:0;pointer-events:none"><path d="M915 11.5h8" stroke="#222" stroke-width="1"/><rect x="947.5" y="7.5" width="7" height="7" fill="none" stroke="#222" stroke-width="1"/><path d="M979 6.5l8 8M987 6.5l-8 8" stroke="#222" stroke-width="1"/><text x="4" y="14" font-family="Liberation Sans,sans-serif" font-weight="bold" font-size="10" fill="#20607a" letter-spacing="-0.8">X5</text><path d="M5 15.5h12" stroke="#20607a" stroke-width="1"/><g transform="translate(0.7 1.3)"><path d="M6.5 40.5h6l3 3v9h-9z" fill="#fff" stroke="#333" stroke-width="1"/><path d="M12.5 40.5v3h3" fill="none" stroke="#333" stroke-width="1"/><path d="M28 52v-8h4l1 1.5h5v2" fill="#e8d060" stroke="#6a5a10" stroke-width="1"/><path d="M28 52l2.5-5h10l-2.5 5z" fill="#f0e070" stroke="#6a5a10" stroke-width="1"/><path d="M35 42c2-2 4-2 5 0l-1.5.2" stroke="#208020" fill="none" stroke-width="1.2"/><rect x="51.5" y="40.5" width="11" height="11" fill="#556b1e" stroke="#222" stroke-width="1"/><rect x="54" y="41" width="6" height="4" fill="#e8e8e8"/><rect x="54" y="47.5" width="6" height="4" fill="#222"/><rect x="74.500" y="44.500" width="13" height="6" rx="1.5" fill="#c8c8c8" stroke="#444"/><rect x="77" y="40.500" width="8" height="4" fill="#fff" stroke="#444" stroke-width=".8"/><rect x="77" y="48.500" width="8" height="4" fill="#fff" stroke="#444" stroke-width=".8"/><path d="M92.500 39v15" stroke="#b4bece"/><rect x="101" y="40" width="12" height="12" rx="1" fill="#c81e1e"/><path d="M103 50c2-2 3-5 3.500-8c1 4 3 6 5 7c-3 0-6 .5-8.500 1z" fill="none" stroke="#fff" stroke-width="1"/><path d="M100 52.500h12" stroke="#888"/><path d="M127 47c1-3 6-3 7 0M127 47l0-3M127 47l3 0" fill="none" stroke="#b0b8c4" stroke-width="1.2"/><path d="M144 45.500h5l-2.500 3z" fill="#b0b8c4"/><path d="M163 47c-1-3-6-3-7 0M163 47l0-3M163 47l-3 0" fill="none" stroke="#b0b8c4" stroke-width="1.2"/><path d="M174 45.500h5l-2.500 3z" fill="#b0b8c4"/></g><g transform="translate(0 2.2)"><path d="M6 66l3-3h10l-3 3zM6 69l3-3h10l-3 3zM6 72l3-3h10l-3 3z" fill="#fff" stroke="#333" stroke-width=".9"/><text x="30" y="64" font-family="Liberation Sans,sans-serif" font-size="5.500" font-weight="bold" fill="#223">50.00</text><path d="M29 65.500h14" stroke="#2040a0" stroke-width="1.500"/><path d="M31 66.500h10l-5 5z" fill="#3060c0"/><path d="M29 73.500h14" stroke="#222" stroke-width="1.200"/><path d="M48.500 59v16M100.500 59v16" stroke="#b4bece"/><rect x="56.500" y="61.500" width="12" height="12" fill="#fff" stroke="#333"/><rect x="57" y="62" width="4" height="11" fill="#c8d850"/><path d="M61 62v11M65 62v11M57 65.500h11M57 69.500h11" stroke="#555" stroke-width=".8"/><rect x="80.500" y="61.500" width="11" height="12" rx="1" fill="#eee" stroke="#333"/><rect x="83" y="64" width="6" height="8" fill="#999"/><path d="M79 64h3M79 67h3M79 70h3" stroke="#333"/><path d="M105 68l7-6l8 3l-7 6z" fill="#6a80c8" stroke="#223" stroke-width=".9"/><path d="M105 68v3l8 3.500v-3.500M113 74.500l7-6v-3.500" fill="#fff" stroke="#223" stroke-width=".9"/><path d="M125.500 66h5l-2.500 3z" fill="#111"/><rect x="137.500" y="62.500" width="13" height="10" fill="#fff" stroke="#304080"/><rect x="138" y="63" width="12" height="2.500" fill="#4060b0"/><path d="M142 66v6M138 69h12" stroke="#8090b0" stroke-width=".8"/><rect x="143.500" y="69.500" width="7" height="5" rx="1" fill="#ddd" stroke="#222" stroke-width=".9"/><circle cx="147" cy="72" r="1.300" fill="#fff" stroke="#222" stroke-width=".7"/></g><path d="M197 62v10h13" fill="none" stroke="#111" stroke-width="1.200"/><path d="M197 72l7-8" fill="none" stroke="#2040c0" stroke-width="1.300"/><text x="192" y="65" font-family="Liberation Sans,sans-serif" font-size="5.500" font-weight="bold" fill="#111">P</text><text x="211" y="73" font-family="Liberation Sans,sans-serif" font-size="5" font-weight="bold" fill="#111">u</text><path d="M192 74.500h22" stroke="#223" stroke-width="1" stroke-dasharray="1 1"/><path d="M225 62v10h13" fill="none" stroke="#111" stroke-width="1.200"/><path d="M225 72c0-5 3-8 8-8" fill="none" stroke="#2040c0" stroke-width="1.300"/><text x="220" y="65" font-family="Liberation Sans,sans-serif" font-size="5.500" font-weight="bold" fill="#111">P</text><text x="239" y="73" font-family="Liberation Sans,sans-serif" font-size="5" font-weight="bold" fill="#111">u</text><path d="M220 74.500h22" stroke="#223" stroke-width="1" stroke-dasharray="1 1"/><path d="M247.500 59v16" stroke="#b4bece"/><rect x="255.500" y="60.500" width="15" height="3" fill="#ddd" stroke="#333" stroke-width=".9"/><path d="M259 67.500h11M259 72.500h11" stroke="#2030a0" stroke-width="1.600"/><rect x="255" y="66" width="3" height="3" fill="#555"/><rect x="255" y="71" width="3" height="3" fill="#555"/><rect x="281.500" y="63.500" width="9" height="6" rx="1" fill="#fff" stroke="#3040b0"/><path d="M282 67.500h8" stroke="#3040b0" stroke-width="1.500"/><path d="M425 65.500h6l-3 3.500z" fill="#111"/><path d="M526 65.500h6l-3 3.500z" fill="#111"/><path d="M636 65.500l3.500 3.500l3.500-3.500" fill="none" stroke="#333" stroke-width="1"/><rect x="677.500" y="60.500" width="9" height="6" fill="#e8e8e8" stroke="#999" stroke-width=".8"/><rect x="677.500" y="67.500" width="9" height="6" fill="#e8e8e8" stroke="#999" stroke-width=".8"/><path d="M679.500 65l2.500-3l2.500 3zM679.500 69l2.500 3l2.500-3z" fill="#111"/><text x="698" y="65" font-family="Liberation Sans,sans-serif" font-size="6" font-weight="bold" fill="#111">max</text><text x="699" y="74" font-family="Liberation Sans,sans-serif" font-size="6" font-weight="bold" fill="#111">min</text><path d="M692 62l4 3M696 62l-4 3M692 70l4 3M696 70l-4 3" stroke="#2040c0" stroke-width="1"/><rect x="715.500" y="60.500" width="12" height="14" fill="#ddd" stroke="#555"/><path d="M718 61v13M725 61v13M718 64h7M718 67h7M718 70h7" stroke="#666" stroke-width=".9"/><path d="M737 61v12h13" fill="none" stroke="#b0b8c0" stroke-width="1.300"/><path d="M739 62h3M748 70v3" stroke="#c0c8d0" stroke-width="1"/><path d="M760 61v12h13" fill="none" stroke="#b0b8c0" stroke-width="1.300"/><path d="M762 62h3M771 70v3" stroke="#c0c8d0" stroke-width="1"/><path d="M781 66l6-5l16 8l-6 6z" fill="#fff" stroke="#333" stroke-width=".9"/><path d="M783 66c4-3 8 6 14 7M786 63c4-2 8 6 14 8" fill="none" stroke="#d04040" stroke-width="1"/><path d="M789 62c3 0 7 6 12 8" fill="none" stroke="#40a040" stroke-width="1"/><path d="M781 66c2 4 8 8 16 9" fill="none" stroke="#e0c020" stroke-width="1.300"/><path d="M8 90v12l3-3l2.500 5l2-1l-2.500-5h4z" fill="#fff" stroke="#222" stroke-width="1"/><circle cx="10.500" cy="115.500" r="4.500" fill="#fff" stroke="#222" stroke-width="1.300"/><path d="M14 119l4.500 5" stroke="#222" stroke-width="2"/><path d="M17 111l2.500 2l-2.500 2z" fill="#111"/><path d="M11 133v9l-6 4M11 142l6 4" fill="none" stroke="#222" stroke-width="1.300"/><path d="M17 133l2.500 2l-2.500 2z" fill="#111"/><path d="M9 135l2-3l2 3" fill="none" stroke="#222"/><path d="M6 158h9v9h-9zM9 155h9v9" fill="#fff" stroke="#222" stroke-width="1.200"/><path d="M9 158v-3M15 167l3-3" stroke="#222"/><path d="M17 154l2.500 2l-2.500 2z" fill="#111"/><rect x="5" y="176.5" width="6" height="3" fill="#c02020"/><rect x="12" y="176.5" width="6" height="3" fill="#2030c0"/><rect x="5" y="180.1" width="6" height="3" fill="#d04040"/><rect x="12" y="180.1" width="6" height="3" fill="#4060e0"/><rect x="5" y="183.7" width="6" height="3" fill="#e0a020"/><rect x="12" y="183.7" width="6" height="3" fill="#20a040"/><rect x="5" y="187.3" width="6" height="3" fill="#e0d040"/><rect x="12" y="187.3" width="6" height="3" fill="#30b0c0"/><path d="M6 199h9M13 197l2.500 2l-2.500 2" fill="none" stroke="#3040c0" stroke-width="1.200"/><path d="M5 212l3-8v8zM13 212l4-10v10z" fill="#fff" stroke="#222" stroke-width="1"/><path d="M17 197l2.500 2l-2.500 2z" fill="#111"/><path d="M12 221l6 6l-6 6l-6-6z" fill="#fff" stroke="#222" stroke-width="1.200"/><circle cx="12" cy="221" r="1.300" fill="#3040c0"/><circle cx="12" cy="233" r="1.300" fill="#3040c0"/><circle cx="6" cy="227" r="1.300" fill="#3040c0"/><path d="M2 227h4" stroke="#222"/><path d="M3 248.500h16M8 243v11M14 243v11" stroke="#3040c0" stroke-width="1" stroke-dasharray="1.500 1"/><circle cx="8" cy="254" r="1.500" fill="none" stroke="#222"/><circle cx="14" cy="254" r="1.500" fill="none" stroke="#222"/><circle cx="4" cy="248.500" r="1.500" fill="none" stroke="#222"/><path d="M17 242l2.500 2l-2.500 2z" fill="#111"/><path d="M5 264v13h13z" fill="#fff" stroke="#222" stroke-width="1.300"/><path d="M8 271v3.500h3.500z" fill="none" stroke="#222" stroke-width=".8"/><path d="M17 263l2.500 2l-2.500 2z" fill="#111"/><path d="M5 287l13 12M17 286l-11 14" stroke="#8890a0" stroke-width="1.200"/><circle cx="12" cy="297" r="2.200" fill="none" stroke="#8890a0" stroke-width=".8"/><path d="M17 285l2.500 2l-2.500 2z" fill="#111"/><text x="9" y="322" font-family="Liberation Serif,serif" font-weight="bold" font-size="11" fill="#111">A</text><path d="M4 318l6-6M8 311.500l2.500 0l0 2.500" fill="none" stroke="#111" stroke-width="1.200"/><circle cx="4.500" cy="317.500" r="1" fill="#111"/><path d="M4 337l5-5h10l-5 5zM4 340.500l5-5M4 337v3.500h10v-3.500M14 340.500l5-5v-3.500" fill="#fff" stroke="#333" stroke-width="1"/><path d="M10 341v3l3-1.500z" fill="#555"/><path d="M6 358a6 6 0 0 1 3.500-5.500M14.500 352.500a6 6 0 0 1 3.500 5.500M16 363a6 6 0 0 1-8 0" fill="none" stroke="#222" stroke-width="1.100" stroke-dasharray="2 1"/><text x="4.500" y="366" font-family="Liberation Sans,sans-serif" font-size="6" font-weight="bold" fill="#2040c0">3</text><text x="15" y="366" font-family="Liberation Sans,sans-serif" font-size="6" font-weight="bold" fill="#2040c0">2</text><path d="M10 351l2.500-1.500v3z" fill="#222"/><rect x="3" y="371.500" width="18" height="18" fill="#cfe0f6" stroke="#a8c4ea" stroke-width="1"/><path d="M7 386v-8h9" fill="none" stroke="#889" stroke-width="1.200"/><path d="M9.500 387v-6.500h7.500v4" fill="none" stroke="#111" stroke-width="2"/><path d="M4 400v4h6v3h6v-4h3" fill="none" stroke="#222" stroke-width="1.500"/><path d="M17 401.500l2.500 1.500l-2.500 1.500" fill="none" stroke="#222"/><path d="M4 424.500h16" stroke="#2040c0" stroke-width="2"/><path d="M12 423v-6" stroke="#2040c0" stroke-width="1.200"/><path d="M12 416c1-1 2-1 2.500-2" stroke="#2040c0" fill="none"/><path d="M5 428h4v3h-4zM15 428h4v3h-4z" fill="#111"/><path d="M6 451l9-9l3 3l-9 9z" fill="#999" stroke="#444" stroke-width=".9"/><path d="M14 441l3-2l3 3l-2 3z" fill="#ccc" stroke="#444" stroke-width=".9"/><path d="M4 469l2-6h2M20 469l-2-6h-2" fill="none" stroke="#222" stroke-width="1.200"/><rect x="3.500" y="468" width="7" height="5" rx="1.500" fill="#fff" stroke="#222" stroke-width="1.300"/><rect x="13.500" y="468" width="7" height="5" rx="1.500" fill="#fff" stroke="#222" stroke-width="1.300"/><path d="M10.500 470h3" stroke="#222" stroke-width="1.300"/><path d="M5 485a3.500 3.500 0 0 1 5-1l-2.500 2.500l1.500 1.500l2.500-2.500a3.500 3.500 0 0 1-3 5l7 6.500l-2 2l-7-7a3.500 3.500 0 0 1-1.500-7z" fill="#bbb" stroke="#333" stroke-width=".9"/><path d="M12 503l7 7.500l-7 7.500l-7-7.500z" fill="#777" stroke="#555"/><text x="10.300" y="514.500" font-family="Liberation Serif,serif" font-weight="bold" font-size="10" fill="#fff">i</text><path d="M988 86l6 6M994 86l-6 6" stroke="#8a8a8a" stroke-width="1"/><rect x="988.500" y="99.500" width="5" height="5" fill="none" stroke="#8a8a8a" stroke-width="1"/><path d="M988.500 119.500l2.500-3l2.500 3" fill="none" stroke="#222" stroke-width="1.300"/><rect x="987" y="125" width="10" height="12" fill="#cdcdcd"/><path d="M988 609.500l2.500 3l2.500-3" fill="none" stroke="#222" stroke-width="1.300"/><path d="M978.500 620l3 2.500l-3 2.500" fill="none" stroke="#222" stroke-width="1.300"/><circle cx="31" cy="622" r="3.200" fill="#fff" stroke="#222" stroke-width="1.100"/><path d="M33.3 624.500l3 3.500" stroke="#222" stroke-width="1.600"/><path d="M29.5 622h3" stroke="#222" stroke-width=".9"/><circle cx="44" cy="622" r="3.200" fill="#fff" stroke="#222" stroke-width="1.100"/><path d="M46.3 624.500l3 3.500" stroke="#222" stroke-width="1.600"/><path d="M42.5 622h3" stroke="#222" stroke-width=".9"/><path d="M31 620.500v3" stroke="#222" stroke-width=".9"/><path d="M55 620v-2h2M62 620v-2h-2M55 625v2h2M62 625v2h-2M57 620.500l3 4M60 620.500l-3 4" fill="none" stroke="#222" stroke-width="1.100"/><path d="M67 622.500h9M71.500 618v9M67 622.500l1.500-1.500M67 622.500l1.500 1.500M76 622.500l-1.500-1.500M76 622.500l-1.500 1.500M71.500 618l-1.500 1.500M71.500 618l1.500 1.500M71.500 627l-1.500-1.500M71.500 627l1.500-1.500" fill="none" stroke="#222" stroke-width="1"/><path d="M88 621a3.500 3.500 0 1 0-1 4.500M86 625.500h3.500" fill="none" stroke="#222" stroke-width="1.200"/><circle cx="100" cy="622" r="2.800" fill="none" stroke="#b8b8b8"/><path d="M95 622h3" stroke="#b8b8b8"/><circle cx="111" cy="622" r="2.800" fill="none" stroke="#b8b8b8"/><path d="M113 622h3" stroke="#b8b8b8"/><path d="M125.500 619.500l-3 2.500l3 2.500" fill="none" stroke="#222" stroke-width="1.300"/><rect x="130" y="618" width="12" height="10.500" fill="#c8c8c8"/><path d="M30.500 562v38.500M30 578.500h26" stroke="#1496b4" stroke-width="1.800" fill="none"/><g font-family="Liberation Sans,sans-serif" font-weight="bold" font-size="9.500" fill="#1496b4"><text x="27" y="562">Z</text><text x="61" y="582">Y</text><text x="27" y="611">X</text></g><rect x="786" y="632" width="13" height="13" fill="#f4f040"/><path d="M788 634l9 9M797 634l-9 9" stroke="#111" stroke-width="1.100"/><rect x="800" y="632" width="13" height="13" fill="#f4f040"/><path d="M803 633v11M809 633v11M801 636h11M801 641h11" stroke="#806010" stroke-width=".8"/><path d="M802 635l5 3.500l-5 3.500z" fill="none" stroke="#111"/><rect x="815.500" y="632.500" width="9" height="12" fill="#d8dce4" stroke="#b0b4bc"/><path d="M816 636h8M816 639h8M816 642h8" stroke="#b0b4bc"/><rect x="828" y="632" width="13" height="13" fill="#f4f040"/><path d="M831 643v-6h8" fill="none" stroke="#3050c0" stroke-width="1.300"/><path d="M833.500 644v-4.500h5v3" fill="none" stroke="#111" stroke-width="1.800"/><path d="M843 644v-5h4v-2.500h4v-2.500h4" fill="none" stroke="#c020c0" stroke-width="2.200"/><path d="M845 645v-4h4v-2.500h4v-2.500h3" fill="none" stroke="#111" stroke-width="1.800"/><rect x="857.500" y="633.500" width="11" height="11" fill="#fff" stroke="#667"/><path d="M863 634v11M858 639h11" stroke="#667"/><rect x="863.500" y="633" width="5.500" height="5.500" fill="#f040c0"/><path d="M884 633l5 5.500l-5 5.500l-5-5.500z" fill="#fff" stroke="#111" stroke-width="1.100"/><circle cx="884" cy="633" r="1.200" fill="#3040c0"/><circle cx="884" cy="644" r="1.200" fill="#3040c0"/><path d="M873 638.500h6M876 636.500l-2.500 2l2.500 2" fill="none" stroke="#111"/><path d="M887 637c2-1 3 2 5 1s2 0 3 1" fill="none" stroke="#b0b8c4" stroke-width="1.200"/><path d="M906 634v7l-4 3M906 641l6 2" fill="none" stroke="#b0b8c4" stroke-width="1.200"/><rect x="913.500" y="633.500" width="9" height="10" fill="#fff" stroke="#111"/><path d="M916 634v10M919 634v10M914 636.500h9M914 639.500h9M914 641.500h9" stroke="#111" stroke-width=".7"/><path d="M931 635v8M935 635v8M929.500 641l1.500 2l1.500-2M933.500 641l1.500 2l1.500-2" fill="none" stroke="#b0b8c4" stroke-width="1.200"/><path d="M945 644v-9M943 637l2-2.500l2 2.500" fill="none" stroke="#d02020" stroke-width="1.300"/><path d="M950 633v8" stroke="#2040c0" stroke-width="1.300"/><circle cx="950" cy="642.500" r="1.600" fill="none" stroke="#2040c0"/><path d="M960 633v9" stroke="#20a020" stroke-width="1.500"/><path d="M960 642h7" stroke="#d02020" stroke-width="1.500"/><path d="M960 642l-3 2.500" stroke="#2040c0" stroke-width="1.300"/><text x="972" y="644" font-family="Liberation Sans,sans-serif" font-weight="bold" font-size="9" fill="#111">1</text><text x="978" y="640" font-family="Liberation Sans,sans-serif" font-weight="bold" font-size="7.500" fill="#111">2</text><path d="M986 644l4-8h5M993 634l2.500 2l-2.500 2M986 637l8 6" fill="none" stroke="#c0c6ce" stroke-width="1.100"/></svg>
<div class="abs" id="winR"></div><div class="abs" id="winL"></div>
</body></html>
